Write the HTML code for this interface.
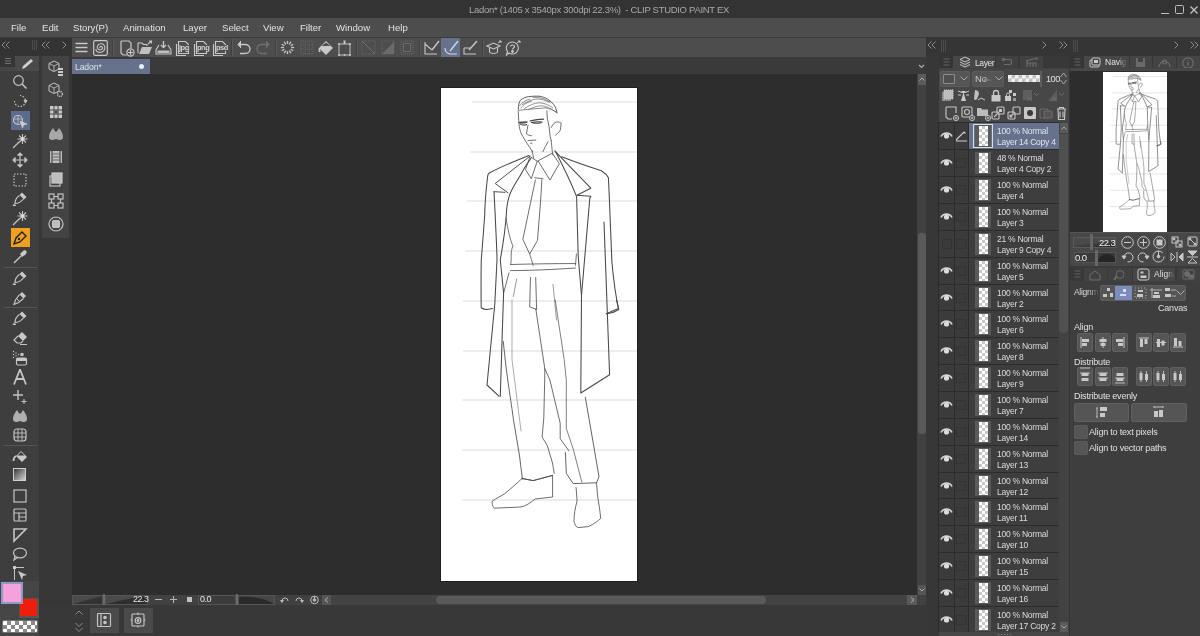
<!DOCTYPE html>
<html><head><meta charset="utf-8">
<style>
*{margin:0;padding:0;box-sizing:border-box}
html,body{width:1200px;height:636px;overflow:hidden;background:#3b3b3b;font-family:"Liberation Sans",sans-serif;color:#d8d8d8}
.a{position:absolute}
.t{position:absolute;white-space:nowrap;font-size:10px;line-height:12px;will-change:transform}
</style></head><body>
<div class="a" style="left:0px;top:0px;width:1200px;height:18px;background:#333333;"></div>
<div class="t" style="left:469px;top:4px;font-size:9.5px;color:#a8a8a8;letter-spacing:-0.3px;line-height:11px">Ladon* (1405 x 3540px 300dpi 22.3%)&nbsp; - CLIP STUDIO PAINT EX</div>
<div class="a" style="left:1161px;top:13px;width:8px;height:1px;background:#bdbdbd;"></div>
<div class="a" style="left:1175px;top:5px;width:9px;height:9px;border:1.5px solid #bdbdbd;border-radius:1.5px"></div>
<svg class="a" style="left:1190px;top:6px;" width="8" height="8" viewBox="0 0 8 8" fill="none" stroke="#c8c8c8" stroke-width="1.2"><path d="M0.5 0.5L7.5 7.5M7.5 0.5L0.5 7.5"/></svg>
<div class="a" style="left:0px;top:18px;width:1200px;height:19px;background:#4d4d4d;"></div>
<div class="t" style="left:11px;top:22px;font-size:9.6px;color:#e2e2e2;line-height:12px">File</div>
<div class="t" style="left:42px;top:22px;font-size:9.6px;color:#e2e2e2;line-height:12px">Edit</div>
<div class="t" style="left:73px;top:22px;font-size:9.6px;color:#e2e2e2;line-height:12px">Story(P)</div>
<div class="t" style="left:123px;top:22px;font-size:9.6px;color:#e2e2e2;line-height:12px">Animation</div>
<div class="t" style="left:183px;top:22px;font-size:9.6px;color:#e2e2e2;line-height:12px">Layer</div>
<div class="t" style="left:222px;top:22px;font-size:9.6px;color:#e2e2e2;line-height:12px">Select</div>
<div class="t" style="left:263px;top:22px;font-size:9.6px;color:#e2e2e2;line-height:12px">View</div>
<div class="t" style="left:300px;top:22px;font-size:9.6px;color:#e2e2e2;line-height:12px">Filter</div>
<div class="t" style="left:336px;top:22px;font-size:9.6px;color:#e2e2e2;line-height:12px">Window</div>
<div class="t" style="left:388px;top:22px;font-size:9.6px;color:#e2e2e2;line-height:12px">Help</div>
<div class="a" style="left:0px;top:37px;width:1200px;height:1px;background:#3a3a3a;"></div>
<div class="a" style="left:0px;top:38px;width:1200px;height:18px;background:#333333;"></div>
<div class="a" style="left:72px;top:38px;width:854px;height:19px;background:#4d4d4d;"></div>
<svg class="a" style="left:1px;top:41px;" width="10" height="8" viewBox="0 0 10 8" fill="none" stroke="#8a8a8a" stroke-width="1"><path d="M4.5 0.5L1 4L4.5 7.5M8.5 0.5L5 4L8.5 7.5"/></svg>
<div class="a" style="left:32px;top:40px;width:1px;height:10px;background:#4c4c4c;"></div>
<div class="a" style="left:34px;top:40px;width:1px;height:10px;background:#4c4c4c;"></div>
<div class="a" style="left:36px;top:40px;width:1px;height:10px;background:#4c4c4c;"></div>
<svg class="a" style="left:41px;top:41px;" width="10" height="8" viewBox="0 0 10 8" fill="none" stroke="#8a8a8a" stroke-width="1"><path d="M4.5 0.5L1 4L4.5 7.5M8.5 0.5L5 4L8.5 7.5"/></svg>
<svg class="a" style="left:62px;top:41px;" width="5" height="8" viewBox="0 0 5 8" fill="none" stroke="#8a8a8a" stroke-width="1"><path d="M0.5 0.5L4 4L0.5 7.5"/></svg>
<div class="a" style="left:0px;top:56px;width:39px;height:525px;background:#3e3e3e;"></div>
<div class="a" style="left:0px;top:56px;width:15px;height:11px;background:#353535;"></div>
<div class="a" style="left:0px;top:67px;width:15px;height:4px;background:#474747;"></div>
<svg class="a" style="left:4px;top:57px;" width="8" height="8" viewBox="0 0 8 8" fill="none" stroke="#7a7a7a" stroke-width="0.9"><path d="M1 1.5H7M1 4H7M1 6.5H7"/></svg>
<div class="a" style="left:15px;top:56px;width:24px;height:15px;background:#4a4a4a;"></div>
<svg class="a" style="left:20px;top:58px;" width="14" height="12" viewBox="0 0 14 12" fill="none" stroke="#c4c4c4" stroke-width="1.2"><path d="M2 11L3 8L11 1L13 3L5 10Z" fill="#cfcfcf" stroke="none"/></svg>
<svg class="a" style="left:12px;top:74px;" width="16" height="16" viewBox="0 0 16 16" fill="none" stroke="#c4c4c4" stroke-width="1.2"><circle cx="6.5" cy="6.5" r="4.8"/><path d="M10 10L14.5 14.5" stroke-width="1.6"/></svg>
<svg class="a" style="left:12px;top:93px;" width="16" height="16" viewBox="0 0 16 16" fill="none" stroke="#c4c4c4" stroke-width="1.2"><path d="M2.5 8A5.5 5.5 0 1 0 8 2.5" stroke-dasharray="1.5 1.5"/><path d="M12 7L13.5 9.5L15 7" fill="#c9c9c9"/></svg>
<div class="a" style="left:11px;top:111px;width:19px;height:19px;background:#5d6b8c;"></div>
<svg class="a" style="left:12px;top:113px;" width="16" height="16" viewBox="0 0 16 16" fill="none" stroke="#c4c4c4" stroke-width="1.2"><circle cx="6" cy="7" r="4.5"/><path d="M2 6H10M6 3V11" stroke-width="0.8"/><path d="M8 8L15 11L11.5 12L10.5 15Z" fill="#d0d0d0" stroke="#d0d0d0" stroke-width="0.6"/></svg>
<svg class="a" style="left:12px;top:133px;" width="16" height="16" viewBox="0 0 16 16" fill="none" stroke="#c4c4c4" stroke-width="1.2"><path d="M1 15L7 9" stroke-width="1.2"/><path d="M10.5 1V11M5.5 6H15.5M7 2.5L14 9.5M14 2.5L7 9.5" stroke-width="1.1"/><circle cx="10.5" cy="6" r="2" fill="#d8d8d8" stroke="none"/></svg>
<svg class="a" style="left:12px;top:152px;" width="16" height="16" viewBox="0 0 16 16" fill="none" stroke="#c4c4c4" stroke-width="1.2"><path d="M8 1V15M1 8H15" /><path d="M5.5 3.5L8 1L10.5 3.5M5.5 12.5L8 15L10.5 12.5M3.5 5.5L1 8L3.5 10.5M12.5 5.5L15 8L12.5 10.5" fill="#c9c9c9"/></svg>
<svg class="a" style="left:12px;top:172px;" width="16" height="16" viewBox="0 0 16 16" fill="none" stroke="#c4c4c4" stroke-width="1.2"><rect x="2" y="2" width="12" height="12" stroke-dasharray="1.6 1.4"/></svg>
<svg class="a" style="left:12px;top:191px;" width="16" height="16" viewBox="0 0 16 16" fill="none" stroke="#c4c4c4" stroke-width="1.2"><path d="M10 1.5L14.5 6L12 8.5L7.5 4Z" fill="#c9c9c9" stroke="none"/><path d="M7.5 4.5C4.5 6.5 3 9.5 3 12.5C6.5 12.5 9.5 10.5 11.5 8M3 12.5L1.5 14.5H4" stroke-width="1.2"/></svg>
<svg class="a" style="left:12px;top:210px;" width="16" height="16" viewBox="0 0 16 16" fill="none" stroke="#c4c4c4" stroke-width="1.2"><path d="M1 15L7 9" stroke-width="1.2"/><path d="M10.5 1V11M5.5 6H15.5M7 2.5L14 9.5M14 2.5L7 9.5" stroke-width="1.1"/><circle cx="10.5" cy="6" r="2" fill="#d8d8d8" stroke="none"/></svg>
<div class="a" style="left:11px;top:228px;width:19px;height:19px;background:#f0a020;"></div>
<svg class="a" style="left:12px;top:230px;" width="16" height="16" viewBox="0 0 16 16" fill="none" stroke="#c4c4c4" stroke-width="1.2"><path d="M2 14L4 8L10 2L14 6L8 12Z" fill="none" stroke="#202020" stroke-width="1.4"/><circle cx="7" cy="9" r="1.2" fill="#202020" stroke="none"/></svg>
<svg class="a" style="left:12px;top:249px;" width="16" height="16" viewBox="0 0 16 16" fill="none" stroke="#c4c4c4" stroke-width="1.2"><path d="M2 14L9 7" stroke-width="1.4"/><path d="M8 5L11 2C12 1 14 1 14.5 2.5C15 4 14 5 13 6L10 8Z" fill="#c9c9c9" stroke="none"/></svg>
<div class="a" style="left:4px;top:267px;width:33px;height:1px;background:#555555;"></div>
<svg class="a" style="left:12px;top:270px;" width="16" height="16" viewBox="0 0 16 16" fill="none" stroke="#c4c4c4" stroke-width="1.2"><path d="M10 1.5L14.5 6L12 8.5L7.5 4Z" fill="#c9c9c9" stroke="none"/><path d="M7.5 4.5C4.5 6.5 3 9.5 3 12.5C6.5 12.5 9.5 10.5 11.5 8M3 12.5L1.5 14.5H4" stroke-width="1.2"/></svg>
<svg class="a" style="left:12px;top:290px;" width="16" height="16" viewBox="0 0 16 16" fill="none" stroke="#c4c4c4" stroke-width="1.2"><path d="M10 2L14 6L11.5 8.5L7.5 4.5Z" fill="#c9c9c9" stroke="none"/><path d="M7.5 4.5L3.5 10L2 14.5L6.5 12.5L11.5 8.5" stroke-width="1.2"/><path d="M5 9L7 11" stroke-width="1"/></svg>
<div class="a" style="left:4px;top:307px;width:33px;height:1px;background:#555555;"></div>
<svg class="a" style="left:12px;top:310px;" width="16" height="16" viewBox="0 0 16 16" fill="none" stroke="#c4c4c4" stroke-width="1.2"><path d="M10 1.5L14.5 6L12 8.5L7.5 4Z" fill="#c9c9c9" stroke="none"/><path d="M7.5 4.5C4.5 6.5 3 9.5 3 12.5C6.5 12.5 9.5 10.5 11.5 8M3 12.5L1.5 14.5H4" stroke-width="1.2"/></svg>
<svg class="a" style="left:12px;top:330px;" width="16" height="16" viewBox="0 0 16 16" fill="none" stroke="#c4c4c4" stroke-width="1.2"><path d="M6 6L10 2L15 7L11 11Z" fill="#c9c9c9" stroke="none"/><path d="M6 6L2 10L5 13H9L11 11" stroke-width="1.2"/><path d="M8 14.5H15" stroke-width="1"/></svg>
<svg class="a" style="left:12px;top:350px;" width="16" height="16" viewBox="0 0 16 16" fill="none" stroke="#c4c4c4" stroke-width="1.2"><circle cx="1.5" cy="1.5" r="0.7" fill="#c9c9c9" stroke="none"/><circle cx="1.5" cy="4.5" r="0.7" fill="#c9c9c9" stroke="none"/><circle cx="1.5" cy="7.5" r="0.7" fill="#c9c9c9" stroke="none"/><circle cx="4" cy="3" r="0.7" fill="#c9c9c9" stroke="none"/><circle cx="4" cy="6" r="0.7" fill="#c9c9c9" stroke="none"/><circle cx="6.5" cy="4.5" r="0.7" fill="#c9c9c9" stroke="none"/><rect x="8.5" y="3" width="3" height="3" fill="#c9c9c9" stroke="none"/><rect x="4.5" y="8" width="10" height="7" rx="1.5" stroke-width="1.2"/><rect x="4.5" y="8" width="10" height="3" rx="1" fill="#c9c9c9" stroke="none"/></svg>
<svg class="a" style="left:12px;top:369px;" width="16" height="16" viewBox="0 0 16 16" fill="none" stroke="#c4c4c4" stroke-width="1.2"><path d="M2 15.5L8 0.5L14 15.5M4.5 10H11.5" stroke-width="1.8"/></svg>
<svg class="a" style="left:12px;top:389px;" width="16" height="16" viewBox="0 0 16 16" fill="none" stroke="#c4c4c4" stroke-width="1.2"><path d="M6 1V11M1 6H11" stroke-width="1.4"/><path d="M12 10V15M9.5 12.5H14.5" stroke-width="1.1"/></svg>
<svg class="a" style="left:12px;top:408px;" width="16" height="16" viewBox="0 0 16 16" fill="none" stroke="#c4c4c4" stroke-width="1.2"><path d="M1 11C1 7 3 5 5 2C6 4 7 5 8 6C9 5 10 4 11 2C13 5 15 7 15 11C15 14 12 15 8 13C4 15 1 14 1 11Z" fill="#b0b0b0" stroke="none"/></svg>
<svg class="a" style="left:12px;top:427px;" width="16" height="16" viewBox="0 0 16 16" fill="none" stroke="#c4c4c4" stroke-width="1.2"><rect x="2" y="2" width="12" height="12" rx="3"/><path d="M2 6H14M2 10H14M6 2V14M10 2V14" stroke-width="0.9"/></svg>
<div class="a" style="left:4px;top:445px;width:33px;height:1px;background:#555555;"></div>
<svg class="a" style="left:12px;top:449px;" width="16" height="16" viewBox="0 0 16 16" fill="none" stroke="#c4c4c4" stroke-width="1.2"><path d="M4 7L9 2L15 8L10 13Z" fill="#c9c9c9" stroke="none"/><path d="M5.5 6.5L9 3L12.5 6.5Z" fill="#3e3e3e" stroke="none"/><path d="M4 7C2 8 1.5 10 1.5 12" stroke-width="1.8"/></svg>
<div class="a" style="left:13px;top:468px;width:13px;height:13px;border:1px solid #cfcfcf;background:linear-gradient(135deg,#3a3a3a,#d0d0d0)"></div>
<svg class="a" style="left:12px;top:488px;" width="16" height="16" viewBox="0 0 16 16" fill="none" stroke="#c4c4c4" stroke-width="1.2"><rect x="2" y="2" width="12" height="12"/></svg>
<svg class="a" style="left:12px;top:507px;" width="16" height="16" viewBox="0 0 16 16" fill="none" stroke="#c4c4c4" stroke-width="1.2"><rect x="2" y="2" width="12" height="12" rx="1"/><path d="M2 6H14M7 6V14M7 10H14"/></svg>
<svg class="a" style="left:12px;top:527px;" width="16" height="16" viewBox="0 0 16 16" fill="none" stroke="#c4c4c4" stroke-width="1.2"><path d="M2 2H14L2 14Z" stroke-width="1.6"/></svg>
<svg class="a" style="left:12px;top:546px;" width="16" height="16" viewBox="0 0 16 16" fill="none" stroke="#c4c4c4" stroke-width="1.2"><ellipse cx="8" cy="7" rx="6.5" ry="4.8"/><path d="M3 10L2 14L6 11"/></svg>
<svg class="a" style="left:12px;top:565px;" width="16" height="16" viewBox="0 0 16 16" fill="none" stroke="#c4c4c4" stroke-width="1.2"><rect x="1" y="1" width="3" height="3" fill="#c9c9c9" stroke="none"/><path d="M2.5 4V15M4 2.5H12" stroke-width="1"/><path d="M6 6L15 10L11 11L10 15Z" fill="#c9c9c9" stroke="none"/></svg>
<div class="a" style="left:0px;top:581px;width:39px;height:55px;background:#454545;"></div>
<div class="a" style="left:19px;top:598px;width:20px;height:20px;background:#555555;"></div>
<div class="a" style="left:20px;top:599px;width:17px;height:17px;background:#f01c0c;"></div>
<div class="a" style="left:1px;top:582px;width:22px;height:22px;background:#8c9bc6;"></div>
<div class="a" style="left:3px;top:584px;width:18px;height:18px;background:#f5a2dc;"></div>
<div class="a" style="left:2px;top:620px;width:36px;height:13px;border:1px solid #707070;border-radius:2px;background-color:#fff;background-image:linear-gradient(45deg,#8a8a8a 25%,transparent 25%,transparent 75%,#8a8a8a 75%),linear-gradient(45deg,#8a8a8a 25%,transparent 25%,transparent 75%,#8a8a8a 75%);background-size:8px 8px;background-position:0 0,4px 4px"></div>
<div class="a" style="left:39px;top:56px;width:33px;height:580px;background:#373737;"></div>
<div class="a" style="left:42px;top:56px;width:27px;height:182px;background:#434343;"></div>
<svg class="a" style="left:48px;top:60px;" width="16" height="16" viewBox="0 0 16 16" fill="none" stroke="#c4c4c4" stroke-width="1.2"><path d="M6 1L11 3.5V9L6 11.5L1 9V3.5Z" stroke-width="1"/><path d="M1 3.5L6 6L11 3.5M6 6V11.5" stroke-width="0.8"/><rect x="10" y="8" width="5" height="2" fill="#c9c9c9" stroke="none"/><rect x="10" y="11" width="5" height="2" fill="#c9c9c9" stroke="none"/><rect x="10" y="14" width="5" height="2" fill="#c9c9c9" stroke="none"/></svg>
<svg class="a" style="left:48px;top:82px;" width="16" height="16" viewBox="0 0 16 16" fill="none" stroke="#c4c4c4" stroke-width="1.2"><path d="M6 1L11 3.5V9L6 11.5L1 9V3.5Z" stroke-width="1"/><path d="M1 3.5L6 6L11 3.5M6 6V11.5" stroke-width="0.8"/><circle cx="12" cy="12" r="2.5" stroke-width="1.4" stroke-dasharray="1.2 0.8"/></svg>
<svg class="a" style="left:48px;top:104px;" width="16" height="16" viewBox="0 0 16 16" fill="none" stroke="#c4c4c4" stroke-width="1.2"><rect x="2" y="2" width="12" height="12" fill="#c9c9c9" stroke="none"/><path d="M2 6H14M2 10H14M6 2V14M10 2V14" stroke="#474747" stroke-width="1"/><rect x="6.5" y="6.5" width="3" height="3" fill="#474747" stroke="none"/></svg>
<svg class="a" style="left:48px;top:126px;" width="16" height="16" viewBox="0 0 16 16" fill="none" stroke="#c4c4c4" stroke-width="1.2"><path d="M1 11C1 7 3 5 5 2C6 4 7 5 8 6C9 5 10 4 11 2C13 5 15 7 15 11C15 14 12 15 8 13C4 15 1 14 1 11Z" fill="#a8a8a8" stroke="none"/></svg>
<svg class="a" style="left:48px;top:149px;" width="16" height="16" viewBox="0 0 16 16" fill="none" stroke="#c4c4c4" stroke-width="1.2"><rect x="2" y="2" width="12" height="12" fill="#bdbdbd" stroke="none"/><path d="M4 2V14M12 2V14" stroke="#474747"/><path d="M5 5H11M5 8H11M5 11H11" stroke="#6a6a6a"/></svg>
<svg class="a" style="left:48px;top:171px;" width="16" height="16" viewBox="0 0 16 16" fill="none" stroke="#c4c4c4" stroke-width="1.2"><rect x="2" y="5" width="10" height="10" stroke-width="1.2"/><rect x="4" y="2" width="10" height="10" fill="#bdbdbd" stroke="#c9c9c9"/></svg>
<svg class="a" style="left:48px;top:193px;" width="16" height="16" viewBox="0 0 16 16" fill="none" stroke="#c4c4c4" stroke-width="1.2"><rect x="1" y="1" width="5" height="5"/><rect x="10" y="1" width="5" height="5"/><rect x="1" y="10" width="5" height="5"/><rect x="10" y="10" width="5" height="5"/><path d="M6 3.5H10M3.5 6V10M12.5 6V10M6 12.5H10"/></svg>
<svg class="a" style="left:48px;top:216px;" width="16" height="16" viewBox="0 0 16 16" fill="none" stroke="#c4c4c4" stroke-width="1.2"><circle cx="8" cy="8" r="7"/><rect x="4.5" y="4.5" width="7" height="7" rx="1.5" fill="#bdbdbd"/></svg>
<div class="a" style="left:39px;top:605px;width:887px;height:31px;background:#383838;"></div>
<svg class="a" style="left:75px;top:610px;" width="8" height="5" viewBox="0 0 8 5" fill="none" stroke="#8a8a8a" stroke-width="1"><path d="M0.5 4.5L4 1L7.5 4.5"/></svg>
<svg class="a" style="left:75px;top:622px;" width="8" height="11" viewBox="0 0 8 11" fill="none" stroke="#8a8a8a" stroke-width="1"><path d="M0.5 1L4 4.5L7.5 1M0.5 6L4 9.5L7.5 6"/></svg>
<div class="a" style="left:90px;top:608px;width:29px;height:25px;background:#4a4a4a;"></div>
<svg class="a" style="left:96px;top:612px;" width="16" height="16" viewBox="0 0 16 16" fill="none" stroke="#c4c4c4" stroke-width="1.2"><rect x="1.5" y="1.5" width="13" height="13" rx="1"/><path d="M5 1.5V14.5"/><circle cx="9" cy="5.5" r="1.2" fill="#c9c9c9"/><circle cx="9" cy="10.5" r="1.2" fill="#c9c9c9"/></svg>
<div class="a" style="left:124px;top:608px;width:29px;height:25px;background:#4a4a4a;"></div>
<svg class="a" style="left:130px;top:612px;" width="16" height="16" viewBox="0 0 16 16" fill="none" stroke="#c4c4c4" stroke-width="1.2"><rect x="2" y="2" width="12" height="12" rx="1"/><circle cx="8" cy="8.5" r="2.8"/><circle cx="8" cy="8.5" r="0.8" fill="#c9c9c9"/><path d="M8 0.5V3M8 14V15.5M0.5 8H2M14 8H15.5"/></svg>
<svg class="a" style="left:75px;top:42px;" width="13" height="11" viewBox="0 0 13 11" fill="none" stroke="#c8c8c8" stroke-width="1.2"><path d="M0.5 1.5H12.5M0.5 5.5H12.5M0.5 9.5H12.5" stroke-width="1.5"/></svg>
<svg class="a" style="left:93px;top:40px;" width="15" height="16" viewBox="0 0 15 16" fill="none" stroke="#c8c8c8" stroke-width="1.2"><rect x="0.7" y="0.7" width="13.6" height="14.6" rx="1.5"/><path d="M3 9C2.5 12 6 13 9 12C12 11 12.5 7 11 5C9.5 3 5.5 3.5 4.5 6C3.5 8.5 6 10.5 8.5 9.5C10 9 10 7 8.5 6.5C7.5 6.2 6.5 7 7 8" stroke-width="1.1"/></svg>
<div class="a" style="left:112px;top:39px;width:1px;height:17px;background:#414141;"></div>
<div class="a" style="left:113px;top:39px;width:1px;height:17px;background:#5a5a5a;"></div>
<svg class="a" style="left:120px;top:40px;" width="15" height="17" viewBox="0 0 15 17" fill="none" stroke="#c8c8c8" stroke-width="1.2"><path d="M1 1H9L11 3V8M1 1V13L3 15H7" stroke-width="1.2"/><circle cx="10.5" cy="12.5" r="3.6" fill="#4f4f4f"/><path d="M10.5 10V15M8 12.5H13"/></svg>
<svg class="a" style="left:137px;top:40px;" width="16" height="15" viewBox="0 0 16 15" fill="none" stroke="#c8c8c8" stroke-width="1.2"><path d="M1 13V3H5L6.5 4.5H10V6" stroke-width="1.1"/><path d="M2 14L5 7H15L12 14Z" fill="#c0c0c0" stroke="none"/><path d="M11 4L14 1.5M12 1H14.5V3.5" stroke-width="1.1"/></svg>
<svg class="a" style="left:155px;top:40px;" width="17" height="15" viewBox="0 0 17 15" fill="none" stroke="#c8c8c8" stroke-width="1.2"><path d="M8.5 1V7M6 5L8.5 7.5L11 5" stroke-width="1.3"/><path d="M4 5L1 10V14H16V10L13 5" stroke-width="1.1"/><rect x="2.5" y="10.5" width="12" height="2.5" fill="#c0c0c0" stroke="none"/></svg>
<svg class="a" style="left:175px;top:40px;" width="16" height="16" viewBox="0 0 16 16" fill="none" stroke="#c8c8c8" stroke-width="1.2"><path d="M3.5 1.5H10.5L13.5 4.5V13.5H3.5Z" stroke-width="1.1"/><path d="M1.5 4V15.5H11" stroke-width="1.1"/><rect x="4.5" y="5" width="11" height="6" fill="#4f4f4f" stroke="none"/></svg>
<div class="t" style="left:179px;top:43px;font-size:7.5px;color:#d0d0d0;letter-spacing:-0.5px;line-height:9px;font-weight:bold">jpg</div>
<svg class="a" style="left:193px;top:40px;" width="16" height="16" viewBox="0 0 16 16" fill="none" stroke="#c8c8c8" stroke-width="1.2"><path d="M3.5 1.5H10.5L13.5 4.5V13.5H3.5Z" stroke-width="1.1"/><path d="M1.5 4V15.5H11" stroke-width="1.1"/><rect x="4.5" y="5" width="11" height="6" fill="#4f4f4f" stroke="none"/></svg>
<div class="t" style="left:197px;top:43px;font-size:7.5px;color:#d0d0d0;letter-spacing:-0.5px;line-height:9px;font-weight:bold">png</div>
<svg class="a" style="left:212px;top:40px;" width="16" height="16" viewBox="0 0 16 16" fill="none" stroke="#c8c8c8" stroke-width="1.2"><path d="M3.5 1.5H10.5L13.5 4.5V13.5H3.5Z" stroke-width="1.1"/><path d="M1.5 4V15.5H11" stroke-width="1.1"/><rect x="4.5" y="5" width="11" height="6" fill="#4f4f4f" stroke="none"/></svg>
<div class="t" style="left:216px;top:43px;font-size:7.5px;color:#d0d0d0;letter-spacing:-0.5px;line-height:9px;font-weight:bold">psd</div>
<div class="a" style="left:231px;top:39px;width:1px;height:17px;background:#414141;"></div>
<div class="a" style="left:232px;top:39px;width:1px;height:17px;background:#5a5a5a;"></div>
<svg class="a" style="left:237px;top:40px;" width="14" height="15" viewBox="0 0 14 15" fill="none" stroke="#c8c8c8" stroke-width="1.2"><path d="M4 1L1 4.5L4 8" fill="#c8c8c8" stroke-width="1"/><path d="M1.5 4.5H8C11 4.5 13 6.5 13 9S11 13.5 8 13.5H3" stroke-width="1.3"/></svg>
<svg class="a" style="left:256px;top:40px;" width="14" height="15" viewBox="0 0 14 15" fill="none" stroke="#707070" stroke-width="1.2"><path d="M10 1L13 4.5L10 8" fill="#6e6e6e" stroke-width="1"/><path d="M12.5 4.5H6C3 4.5 1 6.5 1 9S3 13.5 6 13.5H11" stroke-width="1.3"/></svg>
<div class="a" style="left:275px;top:39px;width:1px;height:17px;background:#414141;"></div>
<div class="a" style="left:276px;top:39px;width:1px;height:17px;background:#5a5a5a;"></div>
<svg class="a" style="left:280px;top:40px;" width="15" height="15" viewBox="0 0 15 15" fill="none" stroke="#c8c8c8" stroke-width="1.3"><path d="M11.10 7.50L14.10 7.50"/><path d="M10.62 9.30L13.22 10.80"/><path d="M9.30 10.62L10.80 13.22"/><path d="M7.50 11.10L7.50 14.10"/><path d="M5.70 10.62L4.20 13.22"/><path d="M4.38 9.30L1.78 10.80"/><path d="M3.90 7.50L0.90 7.50"/><path d="M4.38 5.70L1.78 4.20"/><path d="M5.70 4.38L4.20 1.78"/><path d="M7.50 3.90L7.50 0.90"/><path d="M9.30 4.38L10.80 1.78"/><path d="M10.62 5.70L13.22 4.20"/></svg>
<svg class="a" style="left:300px;top:40px;" width="14" height="15" viewBox="0 0 14 15" fill="none" stroke="#707070" stroke-width="1.2"><rect x="1" y="1" width="12" height="13" stroke-dasharray="1 1" stroke-width="0.8"/><path d="M1 5H13M1 9H13M5 1V14M9 1V14" stroke-width="0.6" stroke-dasharray="1 1"/></svg>
<svg class="a" style="left:318px;top:40px;" width="16" height="16" viewBox="0 0 16 16" fill="none" stroke="#c8c8c8" stroke-width="1.2"><path d="M8 1L15 8L8 15L1 8Z" fill="#c8c8c8" stroke="none"/><path d="M3.5 6L8 2.5L12.5 6Z" fill="#4f4f4f" stroke="none"/><path d="M1.5 8V12" stroke-width="1.8"/></svg>
<svg class="a" style="left:337px;top:40px;" width="15" height="17" viewBox="0 0 15 17" fill="none" stroke="#c8c8c8" stroke-width="1.2"><rect x="2" y="4" width="11" height="11" stroke-width="0.9"/><rect x="6.5" y="0.5" width="2" height="3.5" fill="#c8c8c8" stroke="none"/><circle cx="2" cy="4" r="1" fill="#c8c8c8" stroke="none"/><circle cx="13" cy="4" r="1" fill="#c8c8c8" stroke="none"/><circle cx="2" cy="15" r="1" fill="#c8c8c8" stroke="none"/><circle cx="13" cy="15" r="1" fill="#c8c8c8" stroke="none"/><circle cx="7.5" cy="15" r="1" fill="#c8c8c8" stroke="none"/></svg>
<div class="a" style="left:356px;top:39px;width:1px;height:17px;background:#414141;"></div>
<div class="a" style="left:357px;top:39px;width:1px;height:17px;background:#5a5a5a;"></div>
<svg class="a" style="left:361px;top:40px;" width="15" height="15" viewBox="0 0 15 15" fill="none" stroke="#707070" stroke-width="1.2"><rect x="1" y="1" width="13" height="13" stroke-dasharray="1 1" stroke-width="0.8"/><path d="M1 1L14 14" stroke-width="1"/></svg>
<svg class="a" style="left:381px;top:40px;" width="14" height="15" viewBox="0 0 14 15" fill="none" stroke="#707070" stroke-width="1.2"><path d="M13 2V14H1Z" fill="#6a6a6a" stroke="none"/><rect x="1" y="1" width="12" height="13" stroke-dasharray="1 1" stroke-width="0.7"/></svg>
<svg class="a" style="left:400px;top:40px;" width="14" height="15" viewBox="0 0 14 15" fill="none" stroke="#707070" stroke-width="1.2"><rect x="1" y="1" width="12" height="13" stroke-dasharray="1 1" stroke-width="0.8"/><rect x="3.5" y="3.5" width="7" height="8" stroke-width="0.8"/></svg>
<div class="a" style="left:419px;top:39px;width:1px;height:17px;background:#414141;"></div>
<div class="a" style="left:420px;top:39px;width:1px;height:17px;background:#5a5a5a;"></div>
<svg class="a" style="left:424px;top:40px;" width="16" height="15" viewBox="0 0 16 15" fill="none" stroke="#c8c8c8" stroke-width="1.2"><path d="M1 2V14H13M1 4L8 10" stroke-width="1.1"/><path d="M8 10L15 1" stroke-width="1.4"/></svg>
<div class="a" style="left:441px;top:38px;width:19px;height:19px;background:#66718c;"></div>
<svg class="a" style="left:443px;top:40px;" width="16" height="15" viewBox="0 0 16 15" fill="none" stroke="#d0d6e6" stroke-width="1.2"><path d="M2 8C2 12 5 14 8 14H14" stroke-width="1.2"/><path d="M7 11L15 1" stroke-width="1.4"/></svg>
<svg class="a" style="left:463px;top:40px;" width="16" height="15" viewBox="0 0 16 15" fill="none" stroke="#c8c8c8" stroke-width="1.2"><path d="M1 8V14H13M1 8H7" stroke-width="1.1"/><path d="M6 10L14 1" stroke-width="1.4"/></svg>
<div class="a" style="left:482px;top:39px;width:1px;height:17px;background:#414141;"></div>
<div class="a" style="left:483px;top:39px;width:1px;height:17px;background:#5a5a5a;"></div>
<svg class="a" style="left:486px;top:40px;" width="16" height="16" viewBox="0 0 16 16" fill="none" stroke="#c8c8c8" stroke-width="1.2"><path d="M1 6L7.5 3L14 6L7.5 9Z" stroke-width="1.1"/><path d="M3.5 7.5V12C5 14 10 14 11.5 12V7.5" stroke-width="1.1"/><path d="M12 3L15 1M13 1H15V3" stroke-width="1"/></svg>
<svg class="a" style="left:505px;top:40px;" width="16" height="16" viewBox="0 0 16 16" fill="none" stroke="#c8c8c8" stroke-width="1.2"><path d="M7.5 2A6 6 0 1 1 4 13L1.5 15L2.5 11.5A6 6 0 0 1 7.5 2Z" stroke-width="1.1"/><path d="M5.5 6.5C5.5 4.5 9.5 4.5 9.5 6.5C9.5 8 7.5 8 7.5 9.5" stroke-width="1.2"/><circle cx="7.5" cy="11.5" r="0.8" fill="#c8c8c8"/><path d="M12 3L15 1M13 1H15V3" stroke-width="1"/></svg>
<div class="a" style="left:72px;top:57px;width:854px;height:17px;background:#3a3a3a;"></div>
<div class="a" style="left:72px;top:59px;width:78px;height:15px;background:#66718c;"></div>
<div class="t" style="left:75px;top:62px;font-size:8.6px;color:#dfe3ee;letter-spacing:-0.1px;line-height:11px">Ladon*</div>
<div class="a" style="left:139px;top:64px;width:5px;height:5px;border-radius:50%;background:#e8ecf4"></div>
<svg class="a" style="left:918px;top:64px;" width="7" height="5" viewBox="0 0 7 5" fill="none" stroke="#b0b0b0" stroke-width="1.1"><path d="M1 1L3.5 3.5L6 1"/></svg>
<div class="a" style="left:72px;top:74px;width:845px;height:521px;background:#2d2d2d;"></div>
<div class="a" style="left:917px;top:74px;width:10px;height:531px;background:#414141;"></div>
<div class="a" style="left:918px;top:74px;width:8px;height:11px;background:#5a5a5a;"></div>
<svg class="a" style="left:919px;top:77px;" width="6" height="4" viewBox="0 0 6 4" fill="none" stroke="#b0b0b0" stroke-width="1"><path d="M0.5 3.5L3 1L5.5 3.5"/></svg>
<div class="a" style="left:918px;top:233px;width:8px;height:201px;background:#5a5a5a;border-radius:3px"></div>
<div class="a" style="left:918px;top:585px;width:8px;height:10px;background:#555555;"></div>
<svg class="a" style="left:919px;top:588px;" width="6" height="4" viewBox="0 0 6 4" fill="none" stroke="#b0b0b0" stroke-width="1"><path d="M0.5 0.5L3 3L5.5 0.5"/></svg>
<div class="a" style="left:72px;top:595px;width:845px;height:10px;background:#414141;"></div>
<svg class="a" style="left:72px;top:595px;" width="31" height="10" viewBox="0 0 31 10" fill="none" stroke="#555" stroke-width="1"><rect x="0.5" y="0.5" width="30" height="9" fill="#4a4a4a" stroke="#555"/><path d="M1 9L30 1V9Z" fill="#333" stroke="none"/></svg>
<div class="a" style="left:103px;top:594px;width:2px;height:11px;background:#6a6a6a;"></div>
<svg class="a" style="left:105px;top:595px;" width="43" height="10" viewBox="0 0 43 10" fill="none" stroke="#555" stroke-width="1"><rect x="0.5" y="0.5" width="42" height="9" fill="#4a4a4a" stroke="#555"/><path d="M1 9C10 7 25 3 42 1V9Z" fill="#2e2e2e" stroke="none"/></svg>
<div class="t" style="left:133px;top:594px;font-size:9px;color:#e6e6e6;letter-spacing:-0.5px;line-height:11px">22.3</div>
<div class="a" style="left:155px;top:599px;width:7px;height:1px;background:#b8b8b8;"></div>
<svg class="a" style="left:169px;top:595px;" width="9" height="9" viewBox="0 0 9 9" fill="none" stroke="#b8b8b8" stroke-width="1"><path d="M4.5 1V8M1 4.5H8"/></svg>
<div class="a" style="left:187px;top:597px;width:5px;height:5px;background:#c0c0c0;"></div>
<div class="a" style="left:198px;top:595px;width:38px;height:10px;background:#3c3c3c;border:1px solid #555"></div>
<div class="t" style="left:200px;top:594px;font-size:9px;color:#e6e6e6;letter-spacing:-0.5px;line-height:11px">0.0</div>
<div class="a" style="left:236px;top:594px;width:2px;height:11px;background:#6a6a6a;"></div>
<svg class="a" style="left:238px;top:595px;" width="37" height="10" viewBox="0 0 37 10" fill="none" stroke="#555" stroke-width="1"><rect x="0.5" y="0.5" width="36" height="9" fill="#474747" stroke="#555"/><path d="M1 9V2C10 1 25 2 36 9Z" fill="#2a2a2a" stroke="none"/></svg>
<svg class="a" style="left:280px;top:596px;" width="9" height="8" viewBox="0 0 9 8" fill="none" stroke="#b8b8b8" stroke-width="1"><path d="M2 5A3 3 0 1 1 8 5"/><path d="M0.5 4L2 6.5L3.5 4" fill="#b8b8b8"/></svg>
<svg class="a" style="left:295px;top:596px;" width="9" height="8" viewBox="0 0 9 8" fill="none" stroke="#b8b8b8" stroke-width="1"><path d="M1 5A3 3 0 1 1 7 5"/><path d="M5.5 4L7 6.5L8.5 4" fill="#b8b8b8"/></svg>
<svg class="a" style="left:310px;top:595px;" width="9" height="10" viewBox="0 0 9 10" fill="none" stroke="#b8b8b8" stroke-width="1"><circle cx="4.5" cy="5" r="3.8"/><circle cx="4.5" cy="5" r="1.3" fill="#b8b8b8"/><path d="M4.5 1V5"/></svg>
<div class="a" style="left:322px;top:595px;width:9px;height:10px;background:#555555;"></div>
<svg class="a" style="left:324px;top:597px;" width="5" height="6" viewBox="0 0 5 6" fill="none" stroke="#b0b0b0" stroke-width="1"><path d="M4 0.5L1 3L4 5.5"/></svg>
<div class="a" style="left:331px;top:595px;width:576px;height:10px;background:#434343;"></div>
<div class="a" style="left:436px;top:596px;width:330px;height:8px;background:#5a5a5a;border-radius:4px"></div>
<div class="a" style="left:907px;top:595px;width:10px;height:10px;background:#5a5a5a;"></div>
<svg class="a" style="left:910px;top:597px;" width="5" height="6" viewBox="0 0 5 6" fill="none" stroke="#b0b0b0" stroke-width="1"><path d="M1 0.5L4 3L1 5.5"/></svg>
<div class="a" style="left:440px;top:87px;width:198px;height:495px;background:#1f1f1f"></div>
<div class="a" style="left:441px;top:88px;width:196px;height:493px;background:#ffffff"></div>
<svg class="a" style="left:441px;top:88px" width="196" height="493" viewBox="441 88 196 493" fill="none"><path d="M472 102H637" stroke="#dedede" stroke-width="1.1"/><path d="M470 152H637" stroke="#dedede" stroke-width="1.1"/><path d="M467 201H637" stroke="#dedede" stroke-width="1.1"/><path d="M465 251H637" stroke="#dedede" stroke-width="1.1"/><path d="M463 301H637" stroke="#dedede" stroke-width="1.1"/><path d="M463 351H637" stroke="#dedede" stroke-width="1.1"/><path d="M462 400H637" stroke="#dedede" stroke-width="1.1"/><path d="M462 450H637" stroke="#dedede" stroke-width="1.1"/><path d="M462 500H637" stroke="#dedede" stroke-width="1.1"/>
<g stroke="#484848" stroke-width="0.8" stroke-linecap="round" stroke-linejoin="round">
<!-- hair -->
<path d="M518.25 109.5C518.5 105 519 102 520.3 100.3C523 98 526 97 528.7 96.6C532 96.2 536 96 539 96.2C542 96.6 545 97.5 547.4 99C550 100.5 552 102.5 553.7 104.5C555.5 107 556.5 110 557 112.8" stroke-width="0.9"/>
<path d="M522.4 104.5C527 101.5 532 99.5 537 99C542 99 546 100.5 549.5 102.4M524.5 108.7C529 105 534 103.3 539 102.8C544 102.8 549 105 552.8 107.8M528.7 109.5C533 107.5 537 106 541.2 105.75C546 106 551 108.5 555.75 112M519.5 106C522 102 526 100 530 99M521 108C524 104 527 102.5 531 101.5M533 97.5C539 97 545 98.5 550 102" stroke="#666" stroke-width="0.7"/>
<path d="M519 110.3C525 109.5 532 109 538 108.5C541 108.3 543.5 108 545.3 107.8C550 108.5 554 110 557 112.8" stroke="#555" stroke-width="0.7"/>
<!-- face -->
<path d="M518.2 110.9C518.5 115 518.8 120 518.8 123C519.5 128 520 131 521.5 134C523 137 525 140 525.9 141.7C528 145 530 147.5 532.5 151.6"/>
<path d="M546.8 110.9C547 114 547.2 116 547.4 118.6C548 121 548.5 123.5 549 126.3C549.5 130 550 134 550.1 136.2L551.2 140.6"/>
<path d="M551.2 127.4C553 124 555 122 556.7 122C559 122 561 122.5 561.1 123C561 126 560.5 129 560 130.7C558 133 557 134 555.6 135.1"/>
<path d="M519.3 122.5L527 122M530.3 120.8C535 120 539 119.5 543.5 119.2" stroke-width="1.3"/>
<path d="M520.4 124.1C522 123.5 525 123.8 527 124.7C525 125.5 522 125.5 520.4 124.1Z" stroke-width="0.9"/>
<path d="M531.4 122.5C535 121.5 539 121.5 542.4 122M533 123C536 123.5 539 123.3 541 122.8" stroke-width="1.05"/>
<path d="M528 125.2C527.5 128 526.8 131 526.5 134C528 135 529.5 135.5 531.4 135.7"/>
<path d="M528.1 140.6L535.8 140M530.5 143.2L532 143"/>
<path d="M532 150.5L533.6 158M551.2 140.6L552.3 151.6L553 155M548 141.7C546 145 544.5 148 543 151.6" stroke-width="0.75"/>
<!-- coat shoulders & outer -->
<path d="M529 155.5C515 161 500 167 489.3 173C488 174 487.6 175.5 487.6 176.5C486 190 485 200 484.7 215C483 240 481.5 255 481.2 262C481 280 481 295 481.2 307.7C483 309 485 309.5 487.3 309.5L492.5 308.6" stroke-width="1.05"/>
<path d="M561.7 156.7C575 162 590 167 601.4 170.7C605 173 607 175 608.4 177.7C609 190 609.5 200 610 215C611 240 611.5 255 611.9 262C614 285 616 298 618.8 309.5C615 312 611 313.5 606.7 313.8" stroke-width="1.05"/>
<!-- lapels -->
<path d="M530.2 156L495.2 183.5L508 192.8M494 191.7L505 192.3" stroke-width="0.95"/>
<path d="M494 191.7L495.2 215C496 235 497 250 497 260L494.8 304L487 385L499.2 396.3" stroke-width="1.05"/>
<path d="M531.3 157.8C526 165 523 170 519.7 176.5C515 184 511 190 509.2 196.3C507 203 506.5 208 506.3 215C505 235 501 255 500.3 260L503.6 293L502.5 326L500.3 396.3" stroke-width="1.05"/>
<path d="M509 273L503.6 293" stroke-width="0.8"/>
<path d="M554.7 150.8L590.8 188.2L576.8 195.2L590.8 196.3L589.8 198.3L581.5 295.6" stroke-width="1.05"/>
<path d="M555.8 152C565 170 572 185 576.6 196.6L578.2 256L581.5 295.6L580.8 393L609.6 374.8L604 222" stroke-width="1.05"/>
<path d="M616.5 300L618.4 308.5L606.3 313.8" stroke-width="1.05"/>
<!-- collar & shirt -->
<path d="M530 156.7L525.5 169.5L531.3 178.8L537.2 161.3L531.3 157.3M537.2 161.3L552.3 153.2L559.3 163.7L550 180L538.3 161.3"/>
<path d="M534.8 177.7L543 178.8M535.4 180C531 200 526 225 522.8 239.4L529.7 254L537.5 240.3C539 220 541 200 541.8 180"/>
<path d="M506 218C508 230 510 240 513 246C510 252 512 258 510.7 264.5M529.7 254C531 258 532 262 533.2 265.4M576.4 254L575.5 265.4" stroke-width="0.75"/>
<path d="M510.7 264.5C530 264 555 263.5 575.5 263.6M510.7 270.6C530 270.5 555 269.5 575.5 268"/>
<path d="M530.5 277.5L529.7 307L536.6 309.5L535.7 277.5"/>
<!-- pants -->
<path d="M516.7 279L513.3 296.5M553 284.4L556.5 320" stroke="#777" stroke-width="0.75"/>
<path d="M512 300L512 359.7L521 431" stroke="#8a8a8a" stroke-width="0.7"/>
<path d="M503.3 341.5C507 380 511 400 513.4 419.4L519.4 455L522.4 479" stroke-width="0.85"/>
<path d="M535.8 309L544.8 368.7L544.7 380L543.8 418L542.1 437L547.3 445.6L552.5 463L554.2 473.3" stroke-width="0.8"/>
<path d="M544.8 368.7L549.9 380L560.2 423.2L560.2 438.7L568.9 450.8" stroke-width="0.8"/>
<path d="M555.2 300L564.2 359.7L566.3 380L566.3 428.4L573.2 449L581.8 482" stroke="#555" stroke-width="0.75"/>
<path d="M565.4 452.5L566.3 473.3L573.2 483.6L596.5 482.8" stroke-width="0.85"/>
<path d="M585.3 397.3L592.2 437L599 476.7L596.5 482.8" stroke-width="0.85"/>
<path d="M522 478.5L533.2 480.6L552.6 475.4" stroke-width="0.85"/>
<!-- shoes -->
<path d="M522 478.5L533.2 480.6L552.6 475.4L552.6 497L535.2 499C530 503 526 506 520.9 507L494.3 508.2C492 506 492 503 492.3 501C497 498 501 496 504.5 493.8C512 488 518 482 522 478.5"/>
<path d="M576.1 487.7L577.1 501C575 508 574 515 574 521.5C575 525 576 527 578.2 527.6L588.4 526.6C594 524 598 521 600.7 518.4C600 510 598.5 502 597.6 496L596.6 483.6"/>
</g></svg>
<div class="a" style="left:926px;top:38px;width:274px;height:18px;background:#353535;"></div>
<svg class="a" style="left:927px;top:41px;" width="10" height="8" viewBox="0 0 10 8" fill="none" stroke="#8a8a8a" stroke-width="1"><path d="M4.5 0.5L1 4L4.5 7.5M8.5 0.5L5 4L8.5 7.5"/></svg>
<div class="a" style="left:941px;top:40px;width:1px;height:12px;background:#4c4c4c;"></div>
<div class="a" style="left:943px;top:40px;width:1px;height:12px;background:#4c4c4c;"></div>
<div class="a" style="left:945px;top:40px;width:1px;height:12px;background:#4c4c4c;"></div>
<svg class="a" style="left:1042px;top:41px;" width="5" height="8" viewBox="0 0 5 8" fill="none" stroke="#8a8a8a" stroke-width="1"><path d="M0.5 0.5L4 4L0.5 7.5"/></svg>
<svg class="a" style="left:1058px;top:41px;" width="10" height="8" viewBox="0 0 10 8" fill="none" stroke="#8a8a8a" stroke-width="1"><path d="M1.5 0.5L5 4L1.5 7.5M5.5 0.5L9 4L5.5 7.5"/></svg>
<div class="a" style="left:1073px;top:40px;width:1px;height:12px;background:#4c4c4c;"></div>
<div class="a" style="left:1075px;top:40px;width:1px;height:12px;background:#4c4c4c;"></div>
<div class="a" style="left:1077px;top:40px;width:1px;height:12px;background:#4c4c4c;"></div>
<svg class="a" style="left:1174px;top:41px;" width="5" height="8" viewBox="0 0 5 8" fill="none" stroke="#8a8a8a" stroke-width="1"><path d="M0.5 0.5L4 4L0.5 7.5"/></svg>
<svg class="a" style="left:1189px;top:41px;" width="10" height="8" viewBox="0 0 10 8" fill="none" stroke="#8a8a8a" stroke-width="1"><path d="M1.5 0.5L5 4L1.5 7.5M5.5 0.5L9 4L5.5 7.5"/></svg>
<div class="a" style="left:926px;top:56px;width:13px;height:580px;background:#373737;"></div>
<div class="a" style="left:939px;top:56px;width:130px;height:12px;background:#383838;"></div>
<div class="a" style="left:939px;top:56px;width:14px;height:12px;background:#353535;"></div>
<svg class="a" style="left:942px;top:58px;" width="9" height="8" viewBox="0 0 9 8" fill="none" stroke="#707070" stroke-width="0.8"><path d="M1.5 1H7.5M1.5 4H7.5M1.5 7H7.5"/></svg>
<div class="a" style="left:953px;top:56px;width:42px;height:12px;background:#474747;"></div>
<svg class="a" style="left:959px;top:56px;" width="12" height="12" viewBox="0 0 12 12" fill="none" stroke="#c8c8c8" stroke-width="1.2"><path d="M6 1L11 3.5L6 6L1 3.5Z" stroke-width="1"/><path d="M1 6L6 8.5L11 6M1 8.5L6 11L11 8.5" stroke-width="1"/></svg>
<div class="t" style="left:975px;top:58px;font-size:8.5px;color:#e0e0e0;line-height:11px;letter-spacing:-0.4px">Layer</div>
<div class="a" style="left:996px;top:56px;width:22px;height:12px;background:#414141;"></div>
<svg class="a" style="left:1001px;top:58px;" width="12" height="9" viewBox="0 0 12 9" fill="none" stroke="#6c6c6c" stroke-width="1.2"><path d="M3 1.5H9C11 1.5 11 6.5 9 6.5H3" stroke-width="1.2"/><circle cx="2.5" cy="1.5" r="1" fill="#6c6c6c"/></svg>
<div class="a" style="left:1020px;top:56px;width:23px;height:12px;background:#414141;"></div>
<svg class="a" style="left:1025px;top:57px;" width="13" height="11" viewBox="0 0 13 11" fill="none" stroke="#6c6c6c" stroke-width="1.2"><path d="M1 4L12 1V3M2 4V10M2 6H11V10M5 6V10M8 6V10"/></svg>
<div class="a" style="left:939px;top:68px;width:130px;height:1px;background:#414141;"></div>
<div class="a" style="left:939px;top:69px;width:130px;height:53px;background:#474747;"></div>
<div class="a" style="left:940px;top:71px;width:30px;height:16px;background:#555555;border:1px solid #5c5c5c;border-radius:2px"></div>
<div class="a" style="left:943px;top:74px;width:12px;height:10px;background:#4f4f4f;border:1.3px solid #8c8c8c;border-radius:1px"></div>
<svg class="a" style="left:960px;top:76px;" width="8" height="5" viewBox="0 0 8 5" fill="none" stroke="#a8a8a8" stroke-width="1"><path d="M0.5 0.5L4 4L7.5 0.5"/></svg>
<div class="a" style="left:972px;top:71px;width:32px;height:16px;background:#555555;border:1px solid #5c5c5c;border-radius:2px"></div>
<div class="t" style="left:975px;top:73px;font-size:9.5px;color:#c8c8c8;line-height:11px">No</div>
<div class="a" style="left:984px;top:79px;width:9px;height:2px;background:linear-gradient(90deg,#888,#555)"></div>
<svg class="a" style="left:995px;top:76px;" width="8" height="5" viewBox="0 0 8 5" fill="none" stroke="#a8a8a8" stroke-width="1"><path d="M0.5 0.5L4 4L7.5 0.5"/></svg>
<div class="a" style="left:1008px;top:75px;width:32px;height:7px;background-color:#f2f2f2;background-image:linear-gradient(45deg,#bdbdbd 25%,transparent 25%,transparent 75%,#bdbdbd 75%),linear-gradient(45deg,#bdbdbd 25%,transparent 25%,transparent 75%,#bdbdbd 75%);background-size:7px 7px;background-position:0 0,3.5px 3.5px"></div>
<div class="a" style="left:1040px;top:71px;width:2px;height:16px;background:#5e5e5e;"></div>
<div class="t" style="left:1046px;top:73px;font-size:9.2px;color:#e0e0e0;letter-spacing:-0.5px;line-height:12px">100</div>
<svg class="a" style="left:1060px;top:72px;" width="7" height="13" viewBox="0 0 7 13" fill="none" stroke="#a8a8a8" stroke-width="1"><path d="M0.5 5L3.5 1L6.5 5M0.5 8L3.5 12L6.5 8"/></svg>
<svg class="a" style="left:941px;top:89px;" width="13" height="13" viewBox="0 0 13 13" fill="none" stroke="#c8c8c8" stroke-width="1.1"><rect x="1" y="3" width="9" height="9" fill="#8a8a8a" stroke="none"/><rect x="3" y="1" width="9" height="9" fill="#bdbdbd" stroke="#c8c8c8" stroke-dasharray="1.2 0.8"/></svg>
<svg class="a" style="left:957px;top:89px;" width="13" height="13" viewBox="0 0 13 13" fill="none" stroke="#c8c8c8" stroke-width="1.1"><path d="M6.5 3L4 12H9Z" fill="#c8c8c8" stroke="none"/><path d="M1 2L5 3.5M12 2L8 3.5M1 6H4M9 6H12" stroke-width="1"/><rect x="4.5" y="2" width="4" height="2" fill="#c8c8c8" stroke="none"/></svg>
<svg class="a" style="left:973px;top:89px;" width="13" height="13" viewBox="0 0 13 13" fill="none" stroke="#c8c8c8" stroke-width="1.1"><path d="M2 1C4 1 6 2 6 5L4 10C3 12 1 11 1 9Z" fill="#bdbdbd" stroke="none"/><path d="M5 11L8 9L12 11" stroke-width="1"/></svg>
<svg class="a" style="left:990px;top:89px;" width="12" height="13" viewBox="0 0 12 13" fill="none" stroke="#c8c8c8" stroke-width="1.1"><rect x="1.5" y="6" width="9" height="6.5" fill="#c8c8c8" stroke="none"/><path d="M3.5 6V4A2.5 2.5 0 0 1 8.5 4V6" stroke-width="1.3"/></svg>
<svg class="a" style="left:1004px;top:89px;" width="13" height="13" viewBox="0 0 13 13" fill="none" stroke="#c8c8c8" stroke-width="1.1"><rect x="1" y="7" width="6" height="5" fill="#c8c8c8" stroke="none"/><path d="M2.5 7V5.5A1.5 1.5 0 0 1 5.5 5.5V7" stroke-width="1"/><rect x="5" y="1" width="3" height="3" fill="#c8c8c8" stroke="none"/><rect x="9" y="4" width="3" height="3" fill="#c8c8c8" stroke="none"/><rect x="9" y="9" width="3" height="3" fill="#9a9a9a" stroke="none"/></svg>
<svg class="a" style="left:1022px;top:89px;" width="20" height="13" viewBox="0 0 20 13" fill="none" stroke="#6c6c6c" stroke-width="1.1"><rect x="1" y="1" width="9" height="10" fill="#5e5e5e" stroke="none"/><path d="M5 8L10 12M10 8L5 12M12 4L14.5 6.5L17 4" stroke-width="1"/></svg>
<svg class="a" style="left:1047px;top:89px;" width="20" height="13" viewBox="0 0 20 13" fill="none" stroke="#6c6c6c" stroke-width="1.1"><path d="M1 12L10 1V12Z" fill="#5c5c5c" stroke="none"/><path d="M5 8L10 12M10 8L5 12M12 4L14.5 6.5L17 4" stroke-width="1"/></svg>
<svg class="a" style="left:945px;top:106px;" width="14" height="15" viewBox="0 0 14 15" fill="none" stroke="#c8c8c8" stroke-width="1.1"><path d="M1 1H11V7M1 1V11L3 13H7"/><circle cx="11" cy="12" r="2.6" fill="#474747" stroke-width="0.9"/><path d="M11 10.6V13.4M9.6 12H12.4" stroke-width="0.9"/></svg>
<svg class="a" style="left:961px;top:106px;" width="14" height="15" viewBox="0 0 14 15" fill="none" stroke="#c8c8c8" stroke-width="1.1"><rect x="1" y="1" width="10" height="10" rx="1"/><circle cx="6" cy="6" r="2.5"/><circle cx="11" cy="12" r="2.6" fill="#474747" stroke-width="0.9"/><path d="M11 10.6V13.4M9.6 12H12.4" stroke-width="0.9"/></svg>
<svg class="a" style="left:976px;top:106px;" width="15" height="15" viewBox="0 0 15 15" fill="none" stroke="#c8c8c8" stroke-width="1.1"><path d="M1 2H5L6 3.5H12V10H1Z" fill="#bdbdbd" stroke="none"/><circle cx="12" cy="12" r="2.6" fill="#474747" stroke="#c8c8c8" stroke-width="0.9"/><path d="M12 10.6V13.4M10.6 12H13.4" stroke-width="0.9"/></svg>
<svg class="a" style="left:991px;top:106px;" width="15" height="15" viewBox="0 0 15 15" fill="none" stroke="#c8c8c8" stroke-width="1.1"><rect x="1" y="6" width="7" height="7" rx="1"/><rect x="6" y="1" width="7" height="7" rx="1"/><rect x="8" y="3" width="3" height="3" fill="#c8c8c8" stroke="none"/><path d="M3 11L6 8"/></svg>
<svg class="a" style="left:1007px;top:106px;" width="15" height="15" viewBox="0 0 15 15" fill="none" stroke="#c8c8c8" stroke-width="1.1"><rect x="1" y="6" width="7" height="7" rx="1"/><rect x="6" y="1" width="7" height="7" rx="1"/><path d="M3 11L6 8M3 8.5V11H5.5"/></svg>
<div class="a" style="left:1024px;top:107px;width:12px;height:12px;background:#c8c8c8;border-radius:1px"></div>
<div class="a" style="left:1027px;top:110px;width:6px;height:6px;background:#3a3a3a;border-radius:50%"></div>
<svg class="a" style="left:1039px;top:106px;" width="14" height="15" viewBox="0 0 14 15" fill="none" stroke="#6c6c6c" stroke-width="1.1"><rect x="1" y="3" width="8" height="9" rx="1"/><rect x="5" y="5" width="8" height="7" rx="1" fill="#555"/></svg>
<svg class="a" style="left:1056px;top:106px;" width="11" height="15" viewBox="0 0 11 15" fill="none" stroke="#c8c8c8" stroke-width="1.1"><path d="M1 3H10M3.5 3V1.5H7.5V3M2 3.5L2.5 13.5H8.5L9 3.5M4 5.5V11.5M7 5.5V11.5"/></svg>
<div class="a" style="left:938px;top:122px;width:121px;height:510px;background:#2c2c2c;"></div>
<div class="a" style="left:939px;top:123px;width:15px;height:26px;background:#3b3b3b;"></div>
<div class="a" style="left:955px;top:123px;width:13px;height:26px;background:#3b3b3b;"></div>
<div class="a" style="left:969px;top:123px;width:90px;height:26px;background:#66718c;"></div>
<svg class="a" style="left:940px;top:130px;" width="13" height="10" viewBox="0 0 13 10" fill="none" stroke="#d4d4d4" stroke-width="1.2"><path d="M1 6.5C3 2 10 2 12 6.5" stroke-width="1.6"/><circle cx="6.5" cy="6" r="2.6" fill="#dcdcdc" stroke="none"/></svg>
<svg class="a" style="left:954px;top:129px;" width="15" height="13" viewBox="0 0 15 13" fill="none" stroke="#d0d0d0" stroke-width="1.2"><path d="M2 12H13M2 11L10 3L11.5 4.5" stroke-width="1.2"/></svg>
<div class="a" style="left:973px;top:124px;width:20px;height:24px;background:transparent;border:1px solid #d8dce6"></div>
<div class="a" style="left:975px;top:125px;width:16px;height:22px;background:#5a5a5a;"></div>
<div class="a" style="left:979px;top:126px;width:9px;height:20px;background-color:#fff;background-image:linear-gradient(45deg,#c8c8c8 25%,transparent 25%,transparent 75%,#c8c8c8 75%),linear-gradient(45deg,#c8c8c8 25%,transparent 25%,transparent 75%,#c8c8c8 75%);background-size:6px 6px;background-position:0 0,3px 3px"></div>
<div class="t" style="left:997px;top:126px;font-size:8.5px;color:#dfe3ee;letter-spacing:-0.25px;line-height:11px">100 % Normal</div>
<div class="t" style="left:997px;top:137px;font-size:8.5px;color:#dfe3ee;letter-spacing:-0.25px;line-height:11px">Layer 14 Copy 4</div>
<div class="a" style="left:939px;top:150px;width:15px;height:26px;background:#3b3b3b;"></div>
<div class="a" style="left:955px;top:150px;width:13px;height:26px;background:#3b3b3b;"></div>
<div class="a" style="left:969px;top:150px;width:90px;height:26px;background:#3e3e3e;"></div>
<svg class="a" style="left:940px;top:157px;" width="13" height="10" viewBox="0 0 13 10" fill="none" stroke="#d4d4d4" stroke-width="1.2"><path d="M1 6.5C3 2 10 2 12 6.5" stroke-width="1.6"/><circle cx="6.5" cy="6" r="2.6" fill="#dcdcdc" stroke="none"/></svg>
<div class="a" style="left:956px;top:158px;width:10px;height:10px;background:#3a3a3a;border:1px solid #333"></div>
<div class="a" style="left:975px;top:152px;width:16px;height:22px;background:#5a5a5a;"></div>
<div class="a" style="left:979px;top:153px;width:9px;height:20px;background-color:#fff;background-image:linear-gradient(45deg,#c8c8c8 25%,transparent 25%,transparent 75%,#c8c8c8 75%),linear-gradient(45deg,#c8c8c8 25%,transparent 25%,transparent 75%,#c8c8c8 75%);background-size:6px 6px;background-position:0 0,3px 3px"></div>
<div class="t" style="left:997px;top:153px;font-size:8.5px;color:#dcdcdc;letter-spacing:-0.25px;line-height:11px">48 % Normal</div>
<div class="t" style="left:997px;top:164px;font-size:8.5px;color:#dcdcdc;letter-spacing:-0.25px;line-height:11px">Layer 4 Copy 2</div>
<div class="a" style="left:939px;top:177px;width:15px;height:26px;background:#3b3b3b;"></div>
<div class="a" style="left:955px;top:177px;width:13px;height:26px;background:#3b3b3b;"></div>
<div class="a" style="left:969px;top:177px;width:90px;height:26px;background:#3e3e3e;"></div>
<svg class="a" style="left:940px;top:184px;" width="13" height="10" viewBox="0 0 13 10" fill="none" stroke="#d4d4d4" stroke-width="1.2"><path d="M1 6.5C3 2 10 2 12 6.5" stroke-width="1.6"/><circle cx="6.5" cy="6" r="2.6" fill="#dcdcdc" stroke="none"/></svg>
<div class="a" style="left:956px;top:185px;width:10px;height:10px;background:#3a3a3a;border:1px solid #333"></div>
<div class="a" style="left:975px;top:179px;width:16px;height:22px;background:#5a5a5a;"></div>
<div class="a" style="left:979px;top:180px;width:9px;height:20px;background-color:#fff;background-image:linear-gradient(45deg,#c8c8c8 25%,transparent 25%,transparent 75%,#c8c8c8 75%),linear-gradient(45deg,#c8c8c8 25%,transparent 25%,transparent 75%,#c8c8c8 75%);background-size:6px 6px;background-position:0 0,3px 3px"></div>
<div class="t" style="left:997px;top:180px;font-size:8.5px;color:#dcdcdc;letter-spacing:-0.25px;line-height:11px">100 % Normal</div>
<div class="t" style="left:997px;top:191px;font-size:8.5px;color:#dcdcdc;letter-spacing:-0.25px;line-height:11px">Layer 4</div>
<div class="a" style="left:939px;top:204px;width:15px;height:26px;background:#3b3b3b;"></div>
<div class="a" style="left:955px;top:204px;width:13px;height:26px;background:#3b3b3b;"></div>
<div class="a" style="left:969px;top:204px;width:90px;height:26px;background:#3e3e3e;"></div>
<svg class="a" style="left:940px;top:211px;" width="13" height="10" viewBox="0 0 13 10" fill="none" stroke="#d4d4d4" stroke-width="1.2"><path d="M1 6.5C3 2 10 2 12 6.5" stroke-width="1.6"/><circle cx="6.5" cy="6" r="2.6" fill="#dcdcdc" stroke="none"/></svg>
<div class="a" style="left:956px;top:212px;width:10px;height:10px;background:#3a3a3a;border:1px solid #333"></div>
<div class="a" style="left:975px;top:206px;width:16px;height:22px;background:#5a5a5a;"></div>
<div class="a" style="left:979px;top:207px;width:9px;height:20px;background-color:#fff;background-image:linear-gradient(45deg,#c8c8c8 25%,transparent 25%,transparent 75%,#c8c8c8 75%),linear-gradient(45deg,#c8c8c8 25%,transparent 25%,transparent 75%,#c8c8c8 75%);background-size:6px 6px;background-position:0 0,3px 3px"></div>
<div class="t" style="left:997px;top:207px;font-size:8.5px;color:#dcdcdc;letter-spacing:-0.25px;line-height:11px">100 % Normal</div>
<div class="t" style="left:997px;top:218px;font-size:8.5px;color:#dcdcdc;letter-spacing:-0.25px;line-height:11px">Layer 3</div>
<div class="a" style="left:939px;top:231px;width:15px;height:26px;background:#3b3b3b;"></div>
<div class="a" style="left:955px;top:231px;width:13px;height:26px;background:#3b3b3b;"></div>
<div class="a" style="left:969px;top:231px;width:90px;height:26px;background:#3e3e3e;"></div>
<div class="a" style="left:942px;top:239px;width:10px;height:10px;background:#3a3a3a;border:1px solid #333"></div>
<div class="a" style="left:956px;top:239px;width:10px;height:10px;background:#3a3a3a;border:1px solid #333"></div>
<div class="a" style="left:975px;top:233px;width:16px;height:22px;background:#5a5a5a;"></div>
<div class="a" style="left:979px;top:234px;width:9px;height:20px;background-color:#fff;background-image:linear-gradient(45deg,#c8c8c8 25%,transparent 25%,transparent 75%,#c8c8c8 75%),linear-gradient(45deg,#c8c8c8 25%,transparent 25%,transparent 75%,#c8c8c8 75%);background-size:6px 6px;background-position:0 0,3px 3px"></div>
<div class="t" style="left:997px;top:234px;font-size:8.5px;color:#dcdcdc;letter-spacing:-0.25px;line-height:11px">21 % Normal</div>
<div class="t" style="left:997px;top:245px;font-size:8.5px;color:#dcdcdc;letter-spacing:-0.25px;line-height:11px">Layer 9 Copy 4</div>
<div class="a" style="left:939px;top:258px;width:15px;height:26px;background:#3b3b3b;"></div>
<div class="a" style="left:955px;top:258px;width:13px;height:26px;background:#3b3b3b;"></div>
<div class="a" style="left:969px;top:258px;width:90px;height:26px;background:#3e3e3e;"></div>
<svg class="a" style="left:940px;top:265px;" width="13" height="10" viewBox="0 0 13 10" fill="none" stroke="#d4d4d4" stroke-width="1.2"><path d="M1 6.5C3 2 10 2 12 6.5" stroke-width="1.6"/><circle cx="6.5" cy="6" r="2.6" fill="#dcdcdc" stroke="none"/></svg>
<div class="a" style="left:956px;top:266px;width:10px;height:10px;background:#3a3a3a;border:1px solid #333"></div>
<div class="a" style="left:975px;top:260px;width:16px;height:22px;background:#5a5a5a;"></div>
<div class="a" style="left:979px;top:261px;width:9px;height:20px;background-color:#fff;background-image:linear-gradient(45deg,#c8c8c8 25%,transparent 25%,transparent 75%,#c8c8c8 75%),linear-gradient(45deg,#c8c8c8 25%,transparent 25%,transparent 75%,#c8c8c8 75%);background-size:6px 6px;background-position:0 0,3px 3px"></div>
<div class="t" style="left:997px;top:261px;font-size:8.5px;color:#dcdcdc;letter-spacing:-0.25px;line-height:11px">100 % Normal</div>
<div class="t" style="left:997px;top:272px;font-size:8.5px;color:#dcdcdc;letter-spacing:-0.25px;line-height:11px">Layer 5</div>
<div class="a" style="left:939px;top:285px;width:15px;height:25px;background:#3b3b3b;"></div>
<div class="a" style="left:955px;top:285px;width:13px;height:25px;background:#3b3b3b;"></div>
<div class="a" style="left:969px;top:285px;width:90px;height:25px;background:#3e3e3e;"></div>
<svg class="a" style="left:940px;top:292px;" width="13" height="10" viewBox="0 0 13 10" fill="none" stroke="#d4d4d4" stroke-width="1.2"><path d="M1 6.5C3 2 10 2 12 6.5" stroke-width="1.6"/><circle cx="6.5" cy="6" r="2.6" fill="#dcdcdc" stroke="none"/></svg>
<div class="a" style="left:956px;top:293px;width:10px;height:10px;background:#3a3a3a;border:1px solid #333"></div>
<div class="a" style="left:975px;top:287px;width:16px;height:21px;background:#5a5a5a;"></div>
<div class="a" style="left:979px;top:288px;width:9px;height:19px;background-color:#fff;background-image:linear-gradient(45deg,#c8c8c8 25%,transparent 25%,transparent 75%,#c8c8c8 75%),linear-gradient(45deg,#c8c8c8 25%,transparent 25%,transparent 75%,#c8c8c8 75%);background-size:6px 6px;background-position:0 0,3px 3px"></div>
<div class="t" style="left:997px;top:288px;font-size:8.5px;color:#dcdcdc;letter-spacing:-0.25px;line-height:11px">100 % Normal</div>
<div class="t" style="left:997px;top:299px;font-size:8.5px;color:#dcdcdc;letter-spacing:-0.25px;line-height:11px">Layer 2</div>
<div class="a" style="left:939px;top:311px;width:15px;height:26px;background:#3b3b3b;"></div>
<div class="a" style="left:955px;top:311px;width:13px;height:26px;background:#3b3b3b;"></div>
<div class="a" style="left:969px;top:311px;width:90px;height:26px;background:#3e3e3e;"></div>
<svg class="a" style="left:940px;top:318px;" width="13" height="10" viewBox="0 0 13 10" fill="none" stroke="#d4d4d4" stroke-width="1.2"><path d="M1 6.5C3 2 10 2 12 6.5" stroke-width="1.6"/><circle cx="6.5" cy="6" r="2.6" fill="#dcdcdc" stroke="none"/></svg>
<div class="a" style="left:956px;top:319px;width:10px;height:10px;background:#3a3a3a;border:1px solid #333"></div>
<div class="a" style="left:975px;top:313px;width:16px;height:22px;background:#5a5a5a;"></div>
<div class="a" style="left:979px;top:314px;width:9px;height:20px;background-color:#fff;background-image:linear-gradient(45deg,#c8c8c8 25%,transparent 25%,transparent 75%,#c8c8c8 75%),linear-gradient(45deg,#c8c8c8 25%,transparent 25%,transparent 75%,#c8c8c8 75%);background-size:6px 6px;background-position:0 0,3px 3px"></div>
<div class="t" style="left:997px;top:314px;font-size:8.5px;color:#dcdcdc;letter-spacing:-0.25px;line-height:11px">100 % Normal</div>
<div class="t" style="left:997px;top:325px;font-size:8.5px;color:#dcdcdc;letter-spacing:-0.25px;line-height:11px">Layer 6</div>
<div class="a" style="left:939px;top:338px;width:15px;height:26px;background:#3b3b3b;"></div>
<div class="a" style="left:955px;top:338px;width:13px;height:26px;background:#3b3b3b;"></div>
<div class="a" style="left:969px;top:338px;width:90px;height:26px;background:#3e3e3e;"></div>
<svg class="a" style="left:940px;top:345px;" width="13" height="10" viewBox="0 0 13 10" fill="none" stroke="#d4d4d4" stroke-width="1.2"><path d="M1 6.5C3 2 10 2 12 6.5" stroke-width="1.6"/><circle cx="6.5" cy="6" r="2.6" fill="#dcdcdc" stroke="none"/></svg>
<div class="a" style="left:956px;top:346px;width:10px;height:10px;background:#3a3a3a;border:1px solid #333"></div>
<div class="a" style="left:975px;top:340px;width:16px;height:22px;background:#5a5a5a;"></div>
<div class="a" style="left:979px;top:341px;width:9px;height:20px;background-color:#fff;background-image:linear-gradient(45deg,#c8c8c8 25%,transparent 25%,transparent 75%,#c8c8c8 75%),linear-gradient(45deg,#c8c8c8 25%,transparent 25%,transparent 75%,#c8c8c8 75%);background-size:6px 6px;background-position:0 0,3px 3px"></div>
<div class="t" style="left:997px;top:341px;font-size:8.5px;color:#dcdcdc;letter-spacing:-0.25px;line-height:11px">100 % Normal</div>
<div class="t" style="left:997px;top:352px;font-size:8.5px;color:#dcdcdc;letter-spacing:-0.25px;line-height:11px">Layer 8</div>
<div class="a" style="left:939px;top:365px;width:15px;height:26px;background:#3b3b3b;"></div>
<div class="a" style="left:955px;top:365px;width:13px;height:26px;background:#3b3b3b;"></div>
<div class="a" style="left:969px;top:365px;width:90px;height:26px;background:#3e3e3e;"></div>
<svg class="a" style="left:940px;top:372px;" width="13" height="10" viewBox="0 0 13 10" fill="none" stroke="#d4d4d4" stroke-width="1.2"><path d="M1 6.5C3 2 10 2 12 6.5" stroke-width="1.6"/><circle cx="6.5" cy="6" r="2.6" fill="#dcdcdc" stroke="none"/></svg>
<div class="a" style="left:956px;top:373px;width:10px;height:10px;background:#3a3a3a;border:1px solid #333"></div>
<div class="a" style="left:975px;top:367px;width:16px;height:22px;background:#5a5a5a;"></div>
<div class="a" style="left:979px;top:368px;width:9px;height:20px;background-color:#fff;background-image:linear-gradient(45deg,#c8c8c8 25%,transparent 25%,transparent 75%,#c8c8c8 75%),linear-gradient(45deg,#c8c8c8 25%,transparent 25%,transparent 75%,#c8c8c8 75%);background-size:6px 6px;background-position:0 0,3px 3px"></div>
<div class="t" style="left:997px;top:368px;font-size:8.5px;color:#dcdcdc;letter-spacing:-0.25px;line-height:11px">100 % Normal</div>
<div class="t" style="left:997px;top:379px;font-size:8.5px;color:#dcdcdc;letter-spacing:-0.25px;line-height:11px">Layer 9</div>
<div class="a" style="left:939px;top:392px;width:15px;height:26px;background:#3b3b3b;"></div>
<div class="a" style="left:955px;top:392px;width:13px;height:26px;background:#3b3b3b;"></div>
<div class="a" style="left:969px;top:392px;width:90px;height:26px;background:#3e3e3e;"></div>
<svg class="a" style="left:940px;top:399px;" width="13" height="10" viewBox="0 0 13 10" fill="none" stroke="#d4d4d4" stroke-width="1.2"><path d="M1 6.5C3 2 10 2 12 6.5" stroke-width="1.6"/><circle cx="6.5" cy="6" r="2.6" fill="#dcdcdc" stroke="none"/></svg>
<div class="a" style="left:956px;top:400px;width:10px;height:10px;background:#3a3a3a;border:1px solid #333"></div>
<div class="a" style="left:975px;top:394px;width:16px;height:22px;background:#5a5a5a;"></div>
<div class="a" style="left:979px;top:395px;width:9px;height:20px;background-color:#fff;background-image:linear-gradient(45deg,#c8c8c8 25%,transparent 25%,transparent 75%,#c8c8c8 75%),linear-gradient(45deg,#c8c8c8 25%,transparent 25%,transparent 75%,#c8c8c8 75%);background-size:6px 6px;background-position:0 0,3px 3px"></div>
<div class="t" style="left:997px;top:395px;font-size:8.5px;color:#dcdcdc;letter-spacing:-0.25px;line-height:11px">100 % Normal</div>
<div class="t" style="left:997px;top:406px;font-size:8.5px;color:#dcdcdc;letter-spacing:-0.25px;line-height:11px">Layer 7</div>
<div class="a" style="left:939px;top:419px;width:15px;height:26px;background:#3b3b3b;"></div>
<div class="a" style="left:955px;top:419px;width:13px;height:26px;background:#3b3b3b;"></div>
<div class="a" style="left:969px;top:419px;width:90px;height:26px;background:#3e3e3e;"></div>
<svg class="a" style="left:940px;top:426px;" width="13" height="10" viewBox="0 0 13 10" fill="none" stroke="#d4d4d4" stroke-width="1.2"><path d="M1 6.5C3 2 10 2 12 6.5" stroke-width="1.6"/><circle cx="6.5" cy="6" r="2.6" fill="#dcdcdc" stroke="none"/></svg>
<div class="a" style="left:956px;top:427px;width:10px;height:10px;background:#3a3a3a;border:1px solid #333"></div>
<div class="a" style="left:975px;top:421px;width:16px;height:22px;background:#5a5a5a;"></div>
<div class="a" style="left:979px;top:422px;width:9px;height:20px;background-color:#fff;background-image:linear-gradient(45deg,#c8c8c8 25%,transparent 25%,transparent 75%,#c8c8c8 75%),linear-gradient(45deg,#c8c8c8 25%,transparent 25%,transparent 75%,#c8c8c8 75%);background-size:6px 6px;background-position:0 0,3px 3px"></div>
<div class="t" style="left:997px;top:422px;font-size:8.5px;color:#dcdcdc;letter-spacing:-0.25px;line-height:11px">100 % Normal</div>
<div class="t" style="left:997px;top:433px;font-size:8.5px;color:#dcdcdc;letter-spacing:-0.25px;line-height:11px">Layer 14</div>
<div class="a" style="left:939px;top:446px;width:15px;height:26px;background:#3b3b3b;"></div>
<div class="a" style="left:955px;top:446px;width:13px;height:26px;background:#3b3b3b;"></div>
<div class="a" style="left:969px;top:446px;width:90px;height:26px;background:#3e3e3e;"></div>
<svg class="a" style="left:940px;top:453px;" width="13" height="10" viewBox="0 0 13 10" fill="none" stroke="#d4d4d4" stroke-width="1.2"><path d="M1 6.5C3 2 10 2 12 6.5" stroke-width="1.6"/><circle cx="6.5" cy="6" r="2.6" fill="#dcdcdc" stroke="none"/></svg>
<div class="a" style="left:956px;top:454px;width:10px;height:10px;background:#3a3a3a;border:1px solid #333"></div>
<div class="a" style="left:975px;top:448px;width:16px;height:22px;background:#5a5a5a;"></div>
<div class="a" style="left:979px;top:449px;width:9px;height:20px;background-color:#fff;background-image:linear-gradient(45deg,#c8c8c8 25%,transparent 25%,transparent 75%,#c8c8c8 75%),linear-gradient(45deg,#c8c8c8 25%,transparent 25%,transparent 75%,#c8c8c8 75%);background-size:6px 6px;background-position:0 0,3px 3px"></div>
<div class="t" style="left:997px;top:449px;font-size:8.5px;color:#dcdcdc;letter-spacing:-0.25px;line-height:11px">100 % Normal</div>
<div class="t" style="left:997px;top:460px;font-size:8.5px;color:#dcdcdc;letter-spacing:-0.25px;line-height:11px">Layer 13</div>
<div class="a" style="left:939px;top:473px;width:15px;height:25px;background:#3b3b3b;"></div>
<div class="a" style="left:955px;top:473px;width:13px;height:25px;background:#3b3b3b;"></div>
<div class="a" style="left:969px;top:473px;width:90px;height:25px;background:#3e3e3e;"></div>
<svg class="a" style="left:940px;top:480px;" width="13" height="10" viewBox="0 0 13 10" fill="none" stroke="#d4d4d4" stroke-width="1.2"><path d="M1 6.5C3 2 10 2 12 6.5" stroke-width="1.6"/><circle cx="6.5" cy="6" r="2.6" fill="#dcdcdc" stroke="none"/></svg>
<div class="a" style="left:956px;top:481px;width:10px;height:10px;background:#3a3a3a;border:1px solid #333"></div>
<div class="a" style="left:975px;top:475px;width:16px;height:21px;background:#5a5a5a;"></div>
<div class="a" style="left:979px;top:476px;width:9px;height:19px;background-color:#fff;background-image:linear-gradient(45deg,#c8c8c8 25%,transparent 25%,transparent 75%,#c8c8c8 75%),linear-gradient(45deg,#c8c8c8 25%,transparent 25%,transparent 75%,#c8c8c8 75%);background-size:6px 6px;background-position:0 0,3px 3px"></div>
<div class="t" style="left:997px;top:476px;font-size:8.5px;color:#dcdcdc;letter-spacing:-0.25px;line-height:11px">100 % Normal</div>
<div class="t" style="left:997px;top:487px;font-size:8.5px;color:#dcdcdc;letter-spacing:-0.25px;line-height:11px">Layer 12</div>
<div class="a" style="left:939px;top:499px;width:15px;height:26px;background:#3b3b3b;"></div>
<div class="a" style="left:955px;top:499px;width:13px;height:26px;background:#3b3b3b;"></div>
<div class="a" style="left:969px;top:499px;width:90px;height:26px;background:#3e3e3e;"></div>
<svg class="a" style="left:940px;top:506px;" width="13" height="10" viewBox="0 0 13 10" fill="none" stroke="#d4d4d4" stroke-width="1.2"><path d="M1 6.5C3 2 10 2 12 6.5" stroke-width="1.6"/><circle cx="6.5" cy="6" r="2.6" fill="#dcdcdc" stroke="none"/></svg>
<div class="a" style="left:956px;top:507px;width:10px;height:10px;background:#3a3a3a;border:1px solid #333"></div>
<div class="a" style="left:975px;top:501px;width:16px;height:22px;background:#5a5a5a;"></div>
<div class="a" style="left:979px;top:502px;width:9px;height:20px;background-color:#fff;background-image:linear-gradient(45deg,#c8c8c8 25%,transparent 25%,transparent 75%,#c8c8c8 75%),linear-gradient(45deg,#c8c8c8 25%,transparent 25%,transparent 75%,#c8c8c8 75%);background-size:6px 6px;background-position:0 0,3px 3px"></div>
<div class="t" style="left:997px;top:502px;font-size:8.5px;color:#dcdcdc;letter-spacing:-0.25px;line-height:11px">100 % Normal</div>
<div class="t" style="left:997px;top:513px;font-size:8.5px;color:#dcdcdc;letter-spacing:-0.25px;line-height:11px">Layer 11</div>
<div class="a" style="left:939px;top:526px;width:15px;height:26px;background:#3b3b3b;"></div>
<div class="a" style="left:955px;top:526px;width:13px;height:26px;background:#3b3b3b;"></div>
<div class="a" style="left:969px;top:526px;width:90px;height:26px;background:#3e3e3e;"></div>
<svg class="a" style="left:940px;top:533px;" width="13" height="10" viewBox="0 0 13 10" fill="none" stroke="#d4d4d4" stroke-width="1.2"><path d="M1 6.5C3 2 10 2 12 6.5" stroke-width="1.6"/><circle cx="6.5" cy="6" r="2.6" fill="#dcdcdc" stroke="none"/></svg>
<div class="a" style="left:956px;top:534px;width:10px;height:10px;background:#3a3a3a;border:1px solid #333"></div>
<div class="a" style="left:975px;top:528px;width:16px;height:22px;background:#5a5a5a;"></div>
<div class="a" style="left:979px;top:529px;width:9px;height:20px;background-color:#fff;background-image:linear-gradient(45deg,#c8c8c8 25%,transparent 25%,transparent 75%,#c8c8c8 75%),linear-gradient(45deg,#c8c8c8 25%,transparent 25%,transparent 75%,#c8c8c8 75%);background-size:6px 6px;background-position:0 0,3px 3px"></div>
<div class="t" style="left:997px;top:529px;font-size:8.5px;color:#dcdcdc;letter-spacing:-0.25px;line-height:11px">100 % Normal</div>
<div class="t" style="left:997px;top:540px;font-size:8.5px;color:#dcdcdc;letter-spacing:-0.25px;line-height:11px">Layer 10</div>
<div class="a" style="left:939px;top:553px;width:15px;height:26px;background:#3b3b3b;"></div>
<div class="a" style="left:955px;top:553px;width:13px;height:26px;background:#3b3b3b;"></div>
<div class="a" style="left:969px;top:553px;width:90px;height:26px;background:#3e3e3e;"></div>
<svg class="a" style="left:940px;top:560px;" width="13" height="10" viewBox="0 0 13 10" fill="none" stroke="#d4d4d4" stroke-width="1.2"><path d="M1 6.5C3 2 10 2 12 6.5" stroke-width="1.6"/><circle cx="6.5" cy="6" r="2.6" fill="#dcdcdc" stroke="none"/></svg>
<div class="a" style="left:956px;top:561px;width:10px;height:10px;background:#3a3a3a;border:1px solid #333"></div>
<div class="a" style="left:975px;top:555px;width:16px;height:22px;background:#5a5a5a;"></div>
<div class="a" style="left:979px;top:556px;width:9px;height:20px;background-color:#fff;background-image:linear-gradient(45deg,#c8c8c8 25%,transparent 25%,transparent 75%,#c8c8c8 75%),linear-gradient(45deg,#c8c8c8 25%,transparent 25%,transparent 75%,#c8c8c8 75%);background-size:6px 6px;background-position:0 0,3px 3px"></div>
<div class="t" style="left:997px;top:556px;font-size:8.5px;color:#dcdcdc;letter-spacing:-0.25px;line-height:11px">100 % Normal</div>
<div class="t" style="left:997px;top:567px;font-size:8.5px;color:#dcdcdc;letter-spacing:-0.25px;line-height:11px">Layer 15</div>
<div class="a" style="left:939px;top:580px;width:15px;height:26px;background:#3b3b3b;"></div>
<div class="a" style="left:955px;top:580px;width:13px;height:26px;background:#3b3b3b;"></div>
<div class="a" style="left:969px;top:580px;width:90px;height:26px;background:#3e3e3e;"></div>
<svg class="a" style="left:940px;top:587px;" width="13" height="10" viewBox="0 0 13 10" fill="none" stroke="#d4d4d4" stroke-width="1.2"><path d="M1 6.5C3 2 10 2 12 6.5" stroke-width="1.6"/><circle cx="6.5" cy="6" r="2.6" fill="#dcdcdc" stroke="none"/></svg>
<div class="a" style="left:956px;top:588px;width:10px;height:10px;background:#3a3a3a;border:1px solid #333"></div>
<div class="a" style="left:975px;top:582px;width:16px;height:22px;background:#5a5a5a;"></div>
<div class="a" style="left:979px;top:583px;width:9px;height:20px;background-color:#fff;background-image:linear-gradient(45deg,#c8c8c8 25%,transparent 25%,transparent 75%,#c8c8c8 75%),linear-gradient(45deg,#c8c8c8 25%,transparent 25%,transparent 75%,#c8c8c8 75%);background-size:6px 6px;background-position:0 0,3px 3px"></div>
<div class="t" style="left:997px;top:583px;font-size:8.5px;color:#dcdcdc;letter-spacing:-0.25px;line-height:11px">100 % Normal</div>
<div class="t" style="left:997px;top:594px;font-size:8.5px;color:#dcdcdc;letter-spacing:-0.25px;line-height:11px">Layer 16</div>
<div class="a" style="left:939px;top:607px;width:15px;height:26px;background:#3b3b3b;"></div>
<div class="a" style="left:955px;top:607px;width:13px;height:26px;background:#3b3b3b;"></div>
<div class="a" style="left:969px;top:607px;width:90px;height:26px;background:#3e3e3e;"></div>
<svg class="a" style="left:940px;top:614px;" width="13" height="10" viewBox="0 0 13 10" fill="none" stroke="#d4d4d4" stroke-width="1.2"><path d="M1 6.5C3 2 10 2 12 6.5" stroke-width="1.6"/><circle cx="6.5" cy="6" r="2.6" fill="#dcdcdc" stroke="none"/></svg>
<div class="a" style="left:956px;top:615px;width:10px;height:10px;background:#3a3a3a;border:1px solid #333"></div>
<div class="a" style="left:975px;top:609px;width:16px;height:22px;background:#5a5a5a;"></div>
<div class="a" style="left:979px;top:610px;width:9px;height:20px;background-color:#fff;background-image:linear-gradient(45deg,#c8c8c8 25%,transparent 25%,transparent 75%,#c8c8c8 75%),linear-gradient(45deg,#c8c8c8 25%,transparent 25%,transparent 75%,#c8c8c8 75%);background-size:6px 6px;background-position:0 0,3px 3px"></div>
<div class="t" style="left:997px;top:610px;font-size:8.5px;color:#dcdcdc;letter-spacing:-0.25px;line-height:11px">100 % Normal</div>
<div class="t" style="left:997px;top:621px;font-size:8.5px;color:#dcdcdc;letter-spacing:-0.25px;line-height:11px">Layer 17 Copy 2</div>
<div class="a" style="left:1059px;top:122px;width:10px;height:510px;background:#424242;"></div>
<div class="a" style="left:1060px;top:123px;width:8px;height:10px;background:#5a5a5a;"></div>
<svg class="a" style="left:1061px;top:126px;" width="6" height="4" viewBox="0 0 6 4" fill="none" stroke="#a8a8a8" stroke-width="1"><path d="M0.5 3.5L3 1L5.5 3.5"/></svg>
<div class="a" style="left:1059px;top:134px;width:9px;height:199px;background:#505050;border-radius:0 0 4px 4px"></div>
<div class="a" style="left:1060px;top:622px;width:8px;height:10px;background:#5a5a5a;"></div>
<svg class="a" style="left:1061px;top:625px;" width="6" height="4" viewBox="0 0 6 4" fill="none" stroke="#a8a8a8" stroke-width="1"><path d="M0.5 0.5L3 3L5.5 0.5"/></svg>
<div class="a" style="left:939px;top:632px;width:130px;height:4px;background:#474747;"></div>
<div class="a" style="left:998px;top:634px;width:1px;height:1px;background:#8a8a8a;"></div>
<div class="a" style="left:1001px;top:634px;width:1px;height:1px;background:#8a8a8a;"></div>
<div class="a" style="left:1004px;top:634px;width:1px;height:1px;background:#8a8a8a;"></div>
<div class="a" style="left:1007px;top:634px;width:1px;height:1px;background:#8a8a8a;"></div>
<div class="a" style="left:1010px;top:634px;width:1px;height:1px;background:#8a8a8a;"></div>
<div class="a" style="left:1069px;top:56px;width:1px;height:580px;background:#353535;"></div>
<div class="a" style="left:1070px;top:56px;width:130px;height:12px;background:#383838;"></div>
<div class="a" style="left:1070px;top:56px;width:14px;height:12px;background:#353535;"></div>
<svg class="a" style="left:1073px;top:58px;" width="9" height="8" viewBox="0 0 9 8" fill="none" stroke="#707070" stroke-width="0.8"><path d="M1.5 1H7.5M1.5 4H7.5M1.5 7H7.5"/></svg>
<div class="a" style="left:1084px;top:56px;width:45px;height:12px;background:#474747;"></div>
<svg class="a" style="left:1089px;top:57px;" width="12" height="11" viewBox="0 0 12 11" fill="none" stroke="#c8c8c8" stroke-width="1"><rect x="1" y="3" width="9" height="7" rx="1"/><rect x="3" y="1" width="8" height="7" rx="1" fill="#474747"/><rect x="5" y="3" width="4" height="3" fill="#c8c8c8" stroke="none"/></svg>
<div class="t" style="left:1105px;top:57px;font-size:8.5px;line-height:11px;color:#e0e0e0;width:22px;overflow:hidden;-webkit-mask-image:linear-gradient(90deg,#000 60%,transparent)">Navigator</div>
<div class="a" style="left:1130px;top:56px;width:22px;height:12px;background:#444444;"></div>
<svg class="a" style="left:1135px;top:57px;" width="11" height="11" viewBox="0 0 11 11" fill="none" stroke="#6c6c6c" stroke-width="1.2"><rect x="1" y="1" width="9" height="9" fill="#6a6a6a" stroke="none"/><rect x="3" y="1" width="5" height="4" fill="#414141" stroke="none"/></svg>
<div class="a" style="left:1153px;top:56px;width:23px;height:12px;background:#444444;"></div>
<svg class="a" style="left:1158px;top:57px;" width="13" height="11" viewBox="0 0 13 11" fill="none" stroke="#6c6c6c" stroke-width="1.2"><path d="M1 10A5.5 5.5 0 0 1 12 10" /><circle cx="6.5" cy="5" r="2"/></svg>
<div class="a" style="left:1177px;top:56px;width:23px;height:12px;background:#444444;"></div>
<svg class="a" style="left:1182px;top:57px;" width="12" height="11" viewBox="0 0 12 11" fill="none" stroke="#6c6c6c" stroke-width="1.2"><circle cx="6" cy="6" r="5.2"/><path d="M6 5V9M6 3V3.8" stroke-width="1.4"/></svg>
<div class="a" style="left:1070px;top:68px;width:130px;height:3px;background:#474747;"></div>
<div class="a" style="left:1070px;top:71px;width:130px;height:161px;background:#2d2d2d;"></div>
<div class="a" style="left:1103px;top:72px;width:64px;height:160px;background:#ffffff;"></div>
<svg class="a" style="left:1103px;top:72px" width="64" height="161" viewBox="441 88 196 493" preserveAspectRatio="none" fill="none"><path d="M472 102H637" stroke="#e2e2e2" stroke-width="2.5"/><path d="M470 152H637" stroke="#e2e2e2" stroke-width="2.5"/><path d="M467 201H637" stroke="#e2e2e2" stroke-width="2.5"/><path d="M465 251H637" stroke="#e2e2e2" stroke-width="2.5"/><path d="M463 301H637" stroke="#e2e2e2" stroke-width="2.5"/><path d="M463 351H637" stroke="#e2e2e2" stroke-width="2.5"/><path d="M462 400H637" stroke="#e2e2e2" stroke-width="2.5"/><path d="M462 450H637" stroke="#e2e2e2" stroke-width="2.5"/><path d="M462 500H637" stroke="#e2e2e2" stroke-width="2.5"/>
<g stroke="#555555" stroke-width="1.52" stroke-linecap="round" stroke-linejoin="round">
<!-- hair -->
<path d="M518.25 109.5C518.5 105 519 102 520.3 100.3C523 98 526 97 528.7 96.6C532 96.2 536 96 539 96.2C542 96.6 545 97.5 547.4 99C550 100.5 552 102.5 553.7 104.5C555.5 107 556.5 110 557 112.8" stroke-width="1.71"/>
<path d="M522.4 104.5C527 101.5 532 99.5 537 99C542 99 546 100.5 549.5 102.4M524.5 108.7C529 105 534 103.3 539 102.8C544 102.8 549 105 552.8 107.8M528.7 109.5C533 107.5 537 106 541.2 105.75C546 106 551 108.5 555.75 112M519.5 106C522 102 526 100 530 99M521 108C524 104 527 102.5 531 101.5M533 97.5C539 97 545 98.5 550 102" stroke="#666" stroke-width="1.33"/>
<path d="M519 110.3C525 109.5 532 109 538 108.5C541 108.3 543.5 108 545.3 107.8C550 108.5 554 110 557 112.8" stroke="#555" stroke-width="1.33"/>
<!-- face -->
<path d="M518.2 110.9C518.5 115 518.8 120 518.8 123C519.5 128 520 131 521.5 134C523 137 525 140 525.9 141.7C528 145 530 147.5 532.5 151.6"/>
<path d="M546.8 110.9C547 114 547.2 116 547.4 118.6C548 121 548.5 123.5 549 126.3C549.5 130 550 134 550.1 136.2L551.2 140.6"/>
<path d="M551.2 127.4C553 124 555 122 556.7 122C559 122 561 122.5 561.1 123C561 126 560.5 129 560 130.7C558 133 557 134 555.6 135.1"/>
<path d="M519.3 122.5L527 122M530.3 120.8C535 120 539 119.5 543.5 119.2" stroke-width="2.47"/>
<path d="M520.4 124.1C522 123.5 525 123.8 527 124.7C525 125.5 522 125.5 520.4 124.1Z" stroke-width="1.71"/>
<path d="M531.4 122.5C535 121.5 539 121.5 542.4 122M533 123C536 123.5 539 123.3 541 122.8" stroke-width="1.99"/>
<path d="M528 125.2C527.5 128 526.8 131 526.5 134C528 135 529.5 135.5 531.4 135.7"/>
<path d="M528.1 140.6L535.8 140M530.5 143.2L532 143"/>
<path d="M532 150.5L533.6 158M551.2 140.6L552.3 151.6L553 155M548 141.7C546 145 544.5 148 543 151.6" stroke-width="1.42"/>
<!-- coat shoulders & outer -->
<path d="M529 155.5C515 161 500 167 489.3 173C488 174 487.6 175.5 487.6 176.5C486 190 485 200 484.7 215C483 240 481.5 255 481.2 262C481 280 481 295 481.2 307.7C483 309 485 309.5 487.3 309.5L492.5 308.6" stroke-width="1.99"/>
<path d="M561.7 156.7C575 162 590 167 601.4 170.7C605 173 607 175 608.4 177.7C609 190 609.5 200 610 215C611 240 611.5 255 611.9 262C614 285 616 298 618.8 309.5C615 312 611 313.5 606.7 313.8" stroke-width="1.99"/>
<!-- lapels -->
<path d="M530.2 156L495.2 183.5L508 192.8M494 191.7L505 192.3" stroke-width="1.80"/>
<path d="M494 191.7L495.2 215C496 235 497 250 497 260L494.8 304L487 385L499.2 396.3" stroke-width="1.99"/>
<path d="M531.3 157.8C526 165 523 170 519.7 176.5C515 184 511 190 509.2 196.3C507 203 506.5 208 506.3 215C505 235 501 255 500.3 260L503.6 293L502.5 326L500.3 396.3" stroke-width="1.99"/>
<path d="M509 273L503.6 293" stroke-width="1.52"/>
<path d="M554.7 150.8L590.8 188.2L576.8 195.2L590.8 196.3L589.8 198.3L581.5 295.6" stroke-width="1.99"/>
<path d="M555.8 152C565 170 572 185 576.6 196.6L578.2 256L581.5 295.6L580.8 393L609.6 374.8L604 222" stroke-width="1.99"/>
<path d="M616.5 300L618.4 308.5L606.3 313.8" stroke-width="1.99"/>
<!-- collar & shirt -->
<path d="M530 156.7L525.5 169.5L531.3 178.8L537.2 161.3L531.3 157.3M537.2 161.3L552.3 153.2L559.3 163.7L550 180L538.3 161.3"/>
<path d="M534.8 177.7L543 178.8M535.4 180C531 200 526 225 522.8 239.4L529.7 254L537.5 240.3C539 220 541 200 541.8 180"/>
<path d="M506 218C508 230 510 240 513 246C510 252 512 258 510.7 264.5M529.7 254C531 258 532 262 533.2 265.4M576.4 254L575.5 265.4" stroke-width="1.42"/>
<path d="M510.7 264.5C530 264 555 263.5 575.5 263.6M510.7 270.6C530 270.5 555 269.5 575.5 268"/>
<path d="M530.5 277.5L529.7 307L536.6 309.5L535.7 277.5"/>
<!-- pants -->
<path d="M516.7 279L513.3 296.5M553 284.4L556.5 320" stroke="#777" stroke-width="1.42"/>
<path d="M512 300L512 359.7L521 431" stroke="#8a8a8a" stroke-width="1.33"/>
<path d="M503.3 341.5C507 380 511 400 513.4 419.4L519.4 455L522.4 479" stroke-width="1.61"/>
<path d="M535.8 309L544.8 368.7L544.7 380L543.8 418L542.1 437L547.3 445.6L552.5 463L554.2 473.3" stroke-width="1.52"/>
<path d="M544.8 368.7L549.9 380L560.2 423.2L560.2 438.7L568.9 450.8" stroke-width="1.52"/>
<path d="M555.2 300L564.2 359.7L566.3 380L566.3 428.4L573.2 449L581.8 482" stroke="#555" stroke-width="1.42"/>
<path d="M565.4 452.5L566.3 473.3L573.2 483.6L596.5 482.8" stroke-width="1.61"/>
<path d="M585.3 397.3L592.2 437L599 476.7L596.5 482.8" stroke-width="1.61"/>
<path d="M522 478.5L533.2 480.6L552.6 475.4" stroke-width="1.61"/>
<!-- shoes -->
<path d="M522 478.5L533.2 480.6L552.6 475.4L552.6 497L535.2 499C530 503 526 506 520.9 507L494.3 508.2C492 506 492 503 492.3 501C497 498 501 496 504.5 493.8C512 488 518 482 522 478.5"/>
<path d="M576.1 487.7L577.1 501C575 508 574 515 574 521.5C575 525 576 527 578.2 527.6L588.4 526.6C594 524 598 521 600.7 518.4C600 510 598.5 502 597.6 496L596.6 483.6"/>
</g></svg>
<div class="a" style="left:1070px;top:232px;width:130px;height:34px;background:#474747;"></div>
<div class="a" style="left:1070px;top:232px;width:130px;height:1px;background:#555555;"></div>
<div class="a" style="left:1073px;top:237px;width:43px;height:11px;border:1px solid #5a5a5a;background:linear-gradient(172deg,#4a4a4a 45%,#262626 100%)"></div>
<div class="a" style="left:1090px;top:234px;width:3px;height:16px;background:#666666;"></div>
<div class="t" style="left:1099px;top:237px;font-size:9.5px;color:#f0f0f0;letter-spacing:-0.6px;line-height:12px">22.3</div>
<svg class="a" style="left:1120.5px;top:235.5px;" width="13" height="13" viewBox="0 0 13 13" fill="none" stroke="#c8c8c8" stroke-width="1"><circle cx="6.5" cy="6.5" r="5.8"/><path d="M3 6.5H10"/></svg>
<svg class="a" style="left:1136.5px;top:235.5px;" width="13" height="13" viewBox="0 0 13 13" fill="none" stroke="#c8c8c8" stroke-width="1"><circle cx="6.5" cy="6.5" r="5.8"/><path d="M3 6.5H10M6.5 3V10"/></svg>
<svg class="a" style="left:1152.5px;top:235.5px;" width="13" height="13" viewBox="0 0 13 13" fill="none" stroke="#c8c8c8" stroke-width="1"><circle cx="6.5" cy="6.5" r="5.8"/><rect x="4" y="4" width="5" height="5" fill="#c8c8c8"/></svg>
<div class="a" style="left:1167px;top:235px;width:1px;height:28px;background:#3d3d3d;"></div>
<svg class="a" style="left:1171px;top:236px;" width="12" height="12" viewBox="0 0 12 12" fill="none" stroke="#c8c8c8" stroke-width="1"><rect x="1" y="1" width="6" height="6"/><rect x="5" y="5" width="6" height="6"/><circle cx="3" cy="3" r="1" fill="#c8c8c8"/><circle cx="9" cy="9" r="1" fill="#c8c8c8"/></svg>
<svg class="a" style="left:1187px;top:236px;" width="11" height="11" viewBox="0 0 11 11" fill="none" stroke="#c8c8c8" stroke-width="1"><rect x="1" y="1" width="9" height="9" rx="1"/><path d="M3 3L8 8"/><circle cx="3" cy="3" r="1" fill="#c8c8c8"/><circle cx="8" cy="8" r="1" fill="#c8c8c8"/></svg>
<div class="a" style="left:1074px;top:252px;width:42px;height:11px;background:#3a3a3a;border:1px solid #555"></div>
<div class="t" style="left:1075px;top:252px;font-size:9.5px;color:#f0f0f0;letter-spacing:-0.6px;line-height:12px">0.0</div>
<div class="a" style="left:1097px;top:253px;width:18px;height:9px;background:#3a3a3a;overflow:hidden"><div style="position:absolute;left:1px;top:1px;width:18px;height:16px;border-radius:50%;background:#252525"></div></div>
<div class="a" style="left:1095px;top:250px;width:3px;height:16px;background:#666666;"></div>
<svg class="a" style="left:1121px;top:251px;" width="13" height="12" viewBox="0 0 13 12" fill="none" stroke="#c8c8c8" stroke-width="1"><path d="M3 6A4.5 4.5 0 1 1 6.5 10.8"/><path d="M1 5L3 8L5 5Z" fill="#c8c8c8"/></svg>
<svg class="a" style="left:1137px;top:251px;" width="13" height="12" viewBox="0 0 13 12" fill="none" stroke="#c8c8c8" stroke-width="1"><path d="M10 6A4.5 4.5 0 1 0 6.5 10.8"/><path d="M8 5L10 8L12 5Z" fill="#c8c8c8"/></svg>
<svg class="a" style="left:1152px;top:250px;" width="13" height="13" viewBox="0 0 13 13" fill="none" stroke="#c8c8c8" stroke-width="1"><circle cx="6.5" cy="6.5" r="5.5" stroke-dasharray="30 5"/><circle cx="6.5" cy="6.5" r="1.3" fill="#c8c8c8"/><path d="M6.5 1V6"/></svg>
<svg class="a" style="left:1170px;top:251px;" width="14" height="12" viewBox="0 0 14 12" fill="none" stroke="#c8c8c8" stroke-width="1"><path d="M1 2L5 6L1 10Z"/><path d="M13 2L9 6L13 10Z" fill="#c8c8c8"/><path d="M7 1V11"/></svg>
<svg class="a" style="left:1186px;top:250px;" width="13" height="14" viewBox="0 0 13 14" fill="none" stroke="#c8c8c8" stroke-width="1"><path d="M2 1H11L6.5 5.5Z" fill="#c8c8c8"/><path d="M2 13H11L6.5 8.5Z"/><path d="M1 7H12"/></svg>
<div class="a" style="left:1070px;top:266px;width:130px;height:3px;background:#3a3a3a;"></div>
<div class="a" style="left:1070px;top:269px;width:130px;height:12px;background:#383838;"></div>
<svg class="a" style="left:1073px;top:270px;" width="9" height="8" viewBox="0 0 9 8" fill="none" stroke="#707070" stroke-width="0.8"><path d="M1.5 1H7.5M1.5 4H7.5M1.5 7H7.5"/></svg>
<div class="a" style="left:1084px;top:268px;width:23px;height:13px;background:#414141;"></div>
<svg class="a" style="left:1089px;top:269px;" width="13" height="12" viewBox="0 0 13 12" fill="none" stroke="#6c6c6c" stroke-width="1"><path d="M1 6L6 2L11 6V11H1Z"/></svg>
<div class="a" style="left:1108px;top:268px;width:24px;height:13px;background:#414141;"></div>
<svg class="a" style="left:1113px;top:269px;" width="13" height="12" viewBox="0 0 13 12" fill="none" stroke="#6c6c6c" stroke-width="1"><circle cx="7" cy="5.5" r="4"/><path d="M1 11L4 7" stroke-width="2"/></svg>
<div class="a" style="left:1133px;top:268px;width:42px;height:13px;background:#474747;"></div>
<svg class="a" style="left:1137px;top:268px;" width="13" height="13" viewBox="0 0 13 13" fill="none" stroke="#c8c8c8" stroke-width="1"><rect x="1" y="1" width="11" height="11" rx="2"/><rect x="3.5" y="3.5" width="3" height="2" fill="#c8c8c8" stroke="none"/><rect x="3.5" y="7.5" width="6" height="2.5" fill="#c8c8c8" stroke="none"/></svg>
<div class="t" style="left:1154px;top:269px;font-size:8.5px;line-height:11px;color:#e0e0e0;width:20px;overflow:hidden;-webkit-mask-image:linear-gradient(90deg,#000 65%,transparent)">Align/Distribute</div>
<div class="a" style="left:1177px;top:268px;width:23px;height:13px;background:#414141;"></div>
<svg class="a" style="left:1182px;top:269px;" width="13" height="11" viewBox="0 0 13 11" fill="none" stroke="#6c6c6c" stroke-width="1"><rect x="1" y="1" width="11" height="9" rx="1"/><circle cx="5" cy="5" r="2.5" fill="#6c6c6c"/><rect x="7" y="6" width="4" height="3" fill="#6c6c6c"/></svg>
<div class="a" style="left:1070px;top:281px;width:130px;height:355px;background:#3e3e3e;"></div>
<div class="t" style="left:1074px;top:287px;font-size:8.5px;color:#d8d8d8;letter-spacing:-0.3px;line-height:11px;width:25px;overflow:hidden;-webkit-mask-image:linear-gradient(90deg,#000 60%,transparent)">Alignme</div>
<div class="a" style="left:1100px;top:285px;width:86px;height:16px;background:#555555;border:1px solid #5e5e5e;border-radius:2px"></div>
<div class="a" style="left:1115px;top:286px;width:17px;height:14px;background:#7c8dbd;"></div>
<svg class="a" style="left:1102px;top:287px;" width="13" height="12" viewBox="0 0 13 12" fill="none" stroke="#c4c4c4" stroke-width="1.2"><rect x="5" y="1" width="3" height="3" fill="#c8c8c8" stroke="none"/><rect x="1" y="7" width="4" height="3" fill="#c8c8c8" stroke="none"/><rect x="8" y="6" width="3" height="4" fill="#c8c8c8" stroke="none"/></svg>
<svg class="a" style="left:1117px;top:287px;" width="13" height="12" viewBox="0 0 13 12" fill="none" stroke="#c4c4c4" stroke-width="1.2"><rect x="6" y="2" width="3" height="3" fill="#dde" stroke="none"/><rect x="3" y="7" width="6" height="2" fill="#dde" stroke="none"/></svg>
<svg class="a" style="left:1134px;top:287px;" width="13" height="12" viewBox="0 0 13 12" fill="none" stroke="#c8c8c8" stroke-width="0.8"><path d="M1 1H12V11H1Z" stroke-dasharray="1 2"/><rect x="4" y="3" width="5" height="2" fill="#c8c8c8" stroke="none"/><rect x="3" y="7" width="6" height="3" fill="#c8c8c8" stroke="none"/></svg>
<svg class="a" style="left:1149px;top:287px;" width="14" height="12" viewBox="0 0 14 12" fill="none" stroke="#c8c8c8" stroke-width="0.8"><path d="M1 3H13M3 1V11"/><rect x="5" y="5" width="5" height="2" fill="#c8c8c8" stroke="none"/><rect x="4" y="8" width="7" height="3" fill="#c8c8c8" stroke="none"/></svg>
<svg class="a" style="left:1164px;top:287px;" width="13" height="12" viewBox="0 0 13 12" fill="none" stroke="#c8c8c8" stroke-width="0.8"><rect x="1" y="1" width="5" height="3" fill="#c8c8c8" stroke="none"/><rect x="1" y="7" width="6" height="3" fill="#c8c8c8" stroke="none"/><path d="M7 3H12M8 9H12"/></svg>
<svg class="a" style="left:1176px;top:290px;" width="9" height="6" viewBox="0 0 9 6" fill="none" stroke="#b0b0b0" stroke-width="1"><path d="M0.5 0.5L4.5 4.5L8.5 0.5"/></svg>
<div class="t" style="left:1158px;top:303px;font-size:9px;color:#e0e0e0;letter-spacing:-0.2px;line-height:11px">Canvas</div>
<div class="t" style="left:1074px;top:322px;font-size:9px;color:#e0e0e0;letter-spacing:-0.2px;line-height:11px">Align</div>
<div class="a" style="left:1077px;top:333px;width:16px;height:19px;background:#555555;border:1px solid #606060;border-radius:2px"></div>
<div class="a" style="left:1095px;top:333px;width:16px;height:19px;background:#555555;border:1px solid #606060;border-radius:2px"></div>
<div class="a" style="left:1112px;top:333px;width:16px;height:19px;background:#555555;border:1px solid #606060;border-radius:2px"></div>
<div class="a" style="left:1136px;top:333px;width:16px;height:19px;background:#555555;border:1px solid #606060;border-radius:2px"></div>
<div class="a" style="left:1153px;top:333px;width:16px;height:19px;background:#555555;border:1px solid #606060;border-radius:2px"></div>
<div class="a" style="left:1170px;top:333px;width:16px;height:19px;background:#555555;border:1px solid #606060;border-radius:2px"></div>
<div class="a" style="left:1132px;top:335px;width:1px;height:15px;background:#3d3d3d;"></div>
<svg class="a" style="left:1077px;top:333px;" width="16" height="19" viewBox="0 0 16 19" fill="none" stroke="#c8c8c8" stroke-width="1"><path d="M4 4V15"/><rect x="5" y="6" width="7" height="3" fill="#c8c8c8" stroke="none"/><rect x="5" y="10" width="5" height="3" fill="#c8c8c8" stroke="none"/></svg>
<svg class="a" style="left:1095px;top:333px;" width="16" height="19" viewBox="0 0 16 19" fill="none" stroke="#c8c8c8" stroke-width="1"><path d="M8 4V15"/><rect x="4.5" y="6" width="7" height="3" fill="#c8c8c8" stroke="none"/><rect x="5.5" y="10" width="5" height="3" fill="#c8c8c8" stroke="none"/></svg>
<svg class="a" style="left:1112px;top:333px;" width="16" height="19" viewBox="0 0 16 19" fill="none" stroke="#c8c8c8" stroke-width="1"><path d="M12 4V15"/><rect x="4" y="6" width="7" height="3" fill="#c8c8c8" stroke="none"/><rect x="6" y="10" width="5" height="3" fill="#c8c8c8" stroke="none"/></svg>
<svg class="a" style="left:1136px;top:333px;" width="16" height="19" viewBox="0 0 16 19" fill="none" stroke="#c8c8c8" stroke-width="1"><path d="M3 5H13"/><rect x="4" y="6" width="3" height="8" fill="#c8c8c8" stroke="none"/><rect x="8.5" y="6" width="3" height="5" fill="#c8c8c8" stroke="none"/></svg>
<svg class="a" style="left:1153px;top:333px;" width="16" height="19" viewBox="0 0 16 19" fill="none" stroke="#c8c8c8" stroke-width="1"><path d="M3 9.5H13"/><rect x="4" y="6" width="3" height="8" fill="#c8c8c8" stroke="none"/><rect x="8.5" y="7.5" width="3" height="5" fill="#c8c8c8" stroke="none"/></svg>
<svg class="a" style="left:1170px;top:333px;" width="16" height="19" viewBox="0 0 16 19" fill="none" stroke="#c8c8c8" stroke-width="1"><path d="M3 14H13"/><rect x="4" y="5" width="3" height="8" fill="#c8c8c8" stroke="none"/><rect x="8.5" y="8" width="3" height="5" fill="#c8c8c8" stroke="none"/></svg>
<div class="t" style="left:1074px;top:357px;font-size:9px;color:#e0e0e0;letter-spacing:-0.2px;line-height:11px">Distribute</div>
<div class="a" style="left:1077px;top:367px;width:16px;height:19px;background:#555555;border:1px solid #606060;border-radius:2px"></div>
<div class="a" style="left:1095px;top:367px;width:16px;height:19px;background:#555555;border:1px solid #606060;border-radius:2px"></div>
<div class="a" style="left:1112px;top:367px;width:16px;height:19px;background:#555555;border:1px solid #606060;border-radius:2px"></div>
<div class="a" style="left:1136px;top:367px;width:16px;height:19px;background:#555555;border:1px solid #606060;border-radius:2px"></div>
<div class="a" style="left:1153px;top:367px;width:16px;height:19px;background:#555555;border:1px solid #606060;border-radius:2px"></div>
<div class="a" style="left:1170px;top:367px;width:16px;height:19px;background:#555555;border:1px solid #606060;border-radius:2px"></div>
<div class="a" style="left:1132px;top:369px;width:1px;height:15px;background:#3d3d3d;"></div>
<svg class="a" style="left:1077px;top:367px;" width="16" height="19" viewBox="0 0 16 19" fill="none" stroke="#c8c8c8" stroke-width="0.9"><path d="M3 1H13M3 6H13"/><rect x="4.5" y="6" width="7" height="3" fill="#c8c8c8" stroke="none"/><rect x="4.5" y="11" width="7" height="3" fill="#c8c8c8" stroke="none"/></svg>
<svg class="a" style="left:1095px;top:367px;" width="16" height="19" viewBox="0 0 16 19" fill="none" stroke="#c8c8c8" stroke-width="0.9"><path d="M3 6H13M3 11H13"/><rect x="4.5" y="6" width="7" height="3" fill="#c8c8c8" stroke="none"/><rect x="4.5" y="11" width="7" height="3" fill="#c8c8c8" stroke="none"/></svg>
<svg class="a" style="left:1112px;top:367px;" width="16" height="19" viewBox="0 0 16 19" fill="none" stroke="#c8c8c8" stroke-width="0.9"><path d="M3 11H13M3 16H13"/><rect x="4.5" y="6" width="7" height="3" fill="#c8c8c8" stroke="none"/><rect x="4.5" y="11" width="7" height="3" fill="#c8c8c8" stroke="none"/></svg>
<svg class="a" style="left:1136px;top:367px;" width="16" height="19" viewBox="0 0 16 19" fill="none" stroke="#c8c8c8" stroke-width="0.9"><path d="M5 4V15M10.5 4V15"/><rect x="3.5" y="6" width="3" height="7" fill="#c8c8c8" stroke="none"/><rect x="9" y="7" width="3" height="6" fill="#c8c8c8" stroke="none"/></svg>
<svg class="a" style="left:1153px;top:367px;" width="16" height="19" viewBox="0 0 16 19" fill="none" stroke="#c8c8c8" stroke-width="0.9"><path d="M5 4V15M10.5 4V15"/><rect x="3.5" y="6" width="3" height="7" fill="#c8c8c8" stroke="none"/><rect x="9" y="7" width="3" height="6" fill="#c8c8c8" stroke="none"/></svg>
<svg class="a" style="left:1170px;top:367px;" width="16" height="19" viewBox="0 0 16 19" fill="none" stroke="#c8c8c8" stroke-width="0.9"><path d="M5 4V15M10.5 4V15"/><rect x="3.5" y="6" width="3" height="7" fill="#c8c8c8" stroke="none"/><rect x="9" y="7" width="3" height="6" fill="#c8c8c8" stroke="none"/></svg>
<div class="t" style="left:1074px;top:391px;font-size:9px;color:#e0e0e0;letter-spacing:-0.2px;line-height:11px">Distribute evenly</div>
<div class="a" style="left:1074px;top:403px;width:55px;height:19px;background:#555555;border:1px solid #606060;border-radius:2px"></div>
<div class="a" style="left:1131px;top:403px;width:56px;height:19px;background:#555555;border:1px solid #606060;border-radius:2px"></div>
<svg class="a" style="left:1094px;top:405px;" width="16" height="15" viewBox="0 0 16 15" fill="none" stroke="#c8c8c8" stroke-width="0.9"><path d="M3 3V12M2 3H4M2 12H4"/><rect x="6" y="2" width="7" height="4" fill="#c8c8c8" stroke="none"/><rect x="6" y="8" width="5" height="4" fill="#c8c8c8" stroke="none"/></svg>
<svg class="a" style="left:1151px;top:405px;" width="16" height="15" viewBox="0 0 16 15" fill="none" stroke="#c8c8c8" stroke-width="0.9"><path d="M3 2H12M3 1V3M12 1V3"/><rect x="3" y="6" width="4" height="6" fill="#c8c8c8" stroke="none"/><rect x="8" y="5" width="4" height="7" fill="#c8c8c8" stroke="none"/></svg>
<div class="a" style="left:1074px;top:425px;width:14px;height:14px;background:#555555;border:1px solid #5a5a5a;border-radius:2px"></div>
<div class="t" style="left:1089px;top:427px;font-size:9px;color:#e0e0e0;letter-spacing:-0.2px;line-height:11px">Align to text pixels</div>
<div class="a" style="left:1074px;top:441px;width:14px;height:14px;background:#555555;border:1px solid #5a5a5a;border-radius:2px"></div>
<div class="t" style="left:1089px;top:443px;font-size:9px;color:#e0e0e0;letter-spacing:-0.2px;line-height:11px">Align to vector paths</div>
</body></html>
